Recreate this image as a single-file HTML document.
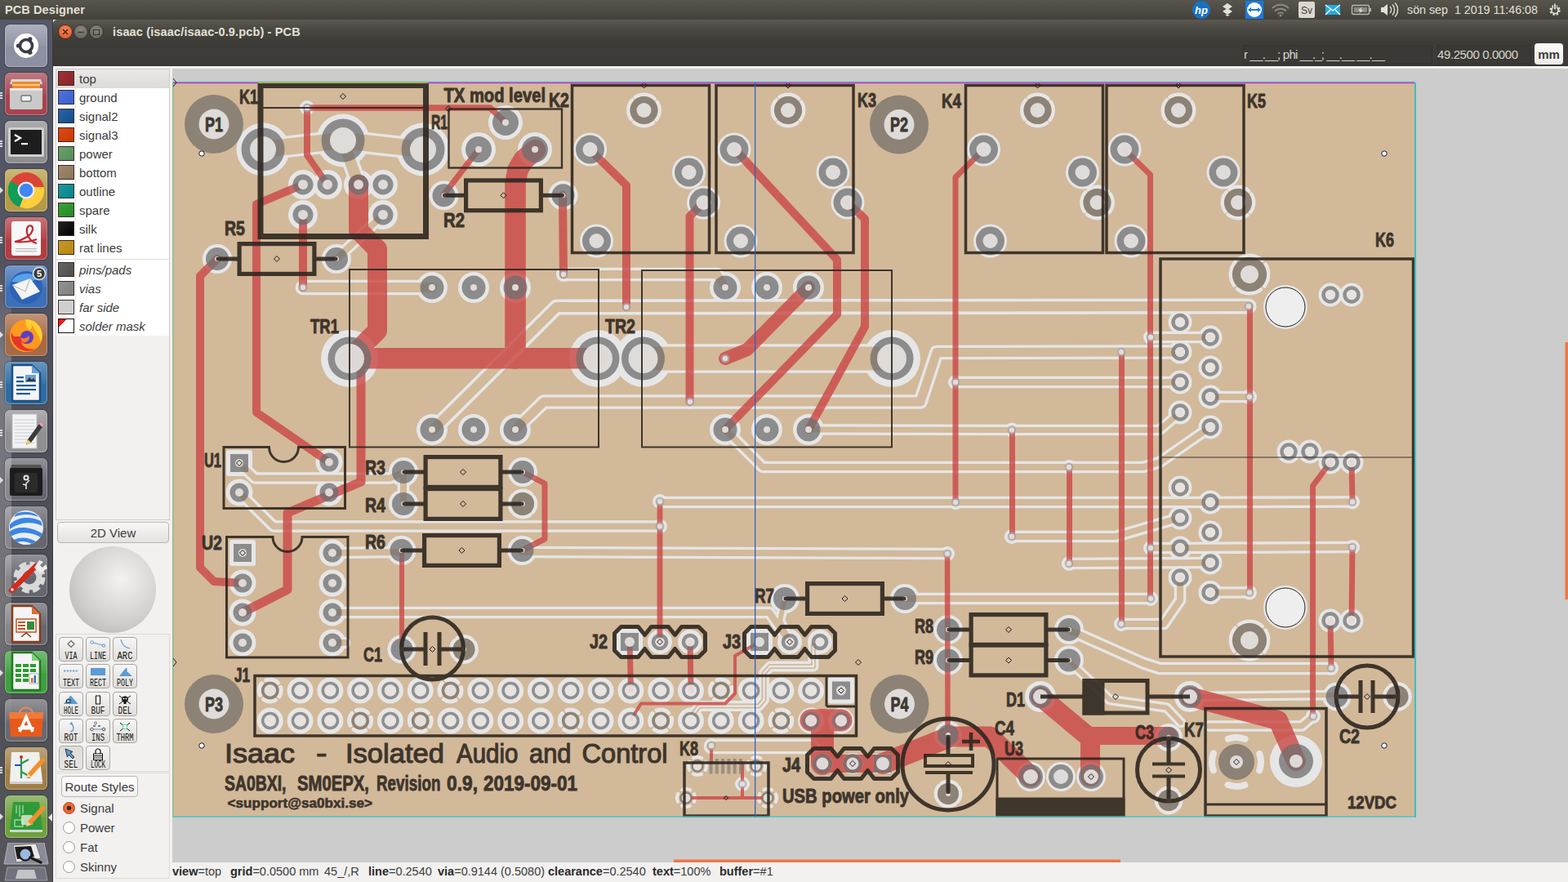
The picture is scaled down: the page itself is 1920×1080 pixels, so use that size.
<!DOCTYPE html>
<html lang="en"><head><meta charset="utf-8"><title>isaac (isaac/isaac-0.9.pcb) - PCB</title>
<style>
html,body{margin:0;padding:0}
body{width:1920px;height:1080px;overflow:hidden;position:relative;background:#f2f1f0;font-family:"Liberation Sans",sans-serif;color:#3c3c3c}
.abs{position:absolute}
#panel{left:0;top:0;width:1920px;height:24px;background:linear-gradient(#57554c,#43413b)}
#panel .t{color:#e4e0d7;font-weight:bold;font-size:14.5px;left:6px;top:4px;letter-spacing:.1px}
#title{left:65px;top:24px;width:1855px;height:57px;background:linear-gradient(#5b594f 0,#4a4842 12px,#3d3c38 27px,#3c3b37 55px,#33322f 57px);border-top-left-radius:5px}
#launcher{left:0;top:24px;width:65px;height:1056px;background:linear-gradient(#565969 0,#50525f 35%,#4c4d56 65%,#55555a 100%)}
.li{position:absolute;left:6px;width:52px;height:52px;border-radius:6px;box-shadow:inset 0 0 0 1px rgba(255,255,255,.32),0 0 0 1px rgba(0,0,0,.22)}
.li:before{content:'';position:absolute;left:1px;top:1px;right:1px;height:26px;border-radius:5px 5px 0 0;background:linear-gradient(rgba(255,255,255,.28),rgba(255,255,255,.04))}
.li svg{position:relative}
.wb{position:absolute;top:7px;width:16px;height:16px;border-radius:50%;background:radial-gradient(circle at 50% 35%,#8a887f,#5e5c55);box-shadow:0 0 0 1px #32312d}
#layers{left:69px;top:85px;width:138px;height:551px;background:#f2f1f0;box-shadow:0 0 0 1px #cfccc7}
.lr{position:absolute;left:0;width:138px;height:23px;background:#fff;font-size:15px;line-height:23px}
.lr i{position:absolute;left:2px;top:2px;width:18px;height:16px;border:1px solid #3a2a2a;box-sizing:content-box}
.lr span{position:absolute;left:28px;top:0}
.btn{position:absolute;border:1px solid #b9b6b0;border-radius:4px;background:linear-gradient(#f8f7f6,#e4e2de);box-sizing:border-box}
.tb{position:absolute;width:30px;height:30px;border:1px solid #aaa7a1;border-radius:4px;background:linear-gradient(#f7f6f5,#dfddd9);box-sizing:border-box;font-family:"Liberation Mono",monospace;font-size:9.5px;text-align:center;color:#111;line-height:10px}
.tb b{position:absolute;left:0;right:0;bottom:2px;font-weight:normal;letter-spacing:-.6px}
.rd{position:absolute;left:77px;width:13px;height:13px;border-radius:50%;border:1px solid #9a9791;background:#fff}
.rl{position:absolute;left:98px;font-size:15px;color:#3c3c3c}
#status{left:211px;top:1058px;font-size:14px;color:#3c3c3c;white-space:pre}
#status b{color:#2a2a2a}
.cb{position:absolute;top:31px;height:24px;background:#3a3935;box-shadow:inset 0 0 0 1px #33322e;color:#d9d5cc;font-size:15px;line-height:24px}
</style></head><body>
<svg style="position:absolute;left:211px;top:84px" width="1709" height="972" viewBox="211 84 1709 972" font-family="'Liberation Sans',sans-serif">
<rect x="211" y="84" width="1709" height="972" fill="#cccccc"/>
<rect x="211" y="101" width="1522" height="899" fill="#d2b99a"/>
<g fill="none" stroke="#e6e6e6" stroke-linejoin="round" stroke-linecap="round"><circle cx="322" cy="183" r="32.5" stroke="none" fill="#e6e6e6"/><circle cx="420" cy="172" r="32.5" stroke="none" fill="#e6e6e6"/><circle cx="518" cy="183" r="32.5" stroke="none" fill="#e6e6e6"/><circle cx="371" cy="226" r="18" stroke="none" fill="#e6e6e6"/><circle cx="401" cy="226" r="18" stroke="none" fill="#e6e6e6"/><circle cx="439" cy="226" r="18" stroke="none" fill="#e6e6e6"/><circle cx="469" cy="226" r="18" stroke="none" fill="#e6e6e6"/><circle cx="371" cy="263" r="18" stroke="none" fill="#e6e6e6"/><circle cx="469" cy="263" r="18" stroke="none" fill="#e6e6e6"/><circle cx="376" cy="132" r="9" stroke="none" fill="#e6e6e6"/><polyline points="322,183 420,172 518,183" stroke-width="26.6"/><polyline points="420,172 439,226" stroke-width="20.6"/><polyline points="412,317 469,263" stroke-width="14.6"/><circle cx="371" cy="352" r="9" stroke="none" fill="#e6e6e6"/><polyline points="371,352 529,352" stroke-width="18.6"/><circle cx="266" cy="317" r="18" stroke="none" fill="#e6e6e6"/><circle cx="412" cy="317" r="18" stroke="none" fill="#e6e6e6"/><circle cx="619" cy="150" r="21" stroke="none" fill="#e6e6e6"/><circle cx="586" cy="183" r="21" stroke="none" fill="#e6e6e6"/><circle cx="655" cy="183" r="21" stroke="none" fill="#e6e6e6"/><circle cx="543.5" cy="239.3" r="18" stroke="none" fill="#e6e6e6"/><circle cx="689.5" cy="239.3" r="18" stroke="none" fill="#e6e6e6"/><circle cx="690" cy="336" r="9" stroke="none" fill="#e6e6e6"/><polyline points="690,336 878,336 888,352" stroke-width="16.6"/><circle cx="788.5" cy="135" r="19.3" fill="none" stroke="#e6e6e6" stroke-width="4.2" stroke-dasharray="26.0359 4.59458" stroke-dashoffset="13.018"/><circle cx="722.5" cy="183" r="20.5" stroke="none" fill="#e6e6e6"/><circle cx="843.5" cy="211" r="20.5" stroke="none" fill="#e6e6e6"/><circle cx="861.5" cy="248" r="20.5" stroke="none" fill="#e6e6e6"/><circle cx="730.5" cy="295" r="20.5" stroke="none" fill="#e6e6e6"/><circle cx="965" cy="135" r="19.3" fill="none" stroke="#e6e6e6" stroke-width="4.2" stroke-dasharray="26.0359 4.59458" stroke-dashoffset="13.018"/><circle cx="899" cy="183" r="20.5" stroke="none" fill="#e6e6e6"/><circle cx="1020" cy="211" r="20.5" stroke="none" fill="#e6e6e6"/><circle cx="1038" cy="248" r="20.5" stroke="none" fill="#e6e6e6"/><circle cx="907" cy="295" r="20.5" stroke="none" fill="#e6e6e6"/><circle cx="1270.5" cy="135" r="19.3" fill="none" stroke="#e6e6e6" stroke-width="4.2" stroke-dasharray="26.0359 4.59458" stroke-dashoffset="13.018"/><circle cx="1204.5" cy="183" r="20.5" stroke="none" fill="#e6e6e6"/><circle cx="1325.5" cy="211" r="20.5" stroke="none" fill="#e6e6e6"/><circle cx="1343.5" cy="248" r="19.3" fill="none" stroke="#e6e6e6" stroke-width="4.2" stroke-dasharray="26.0359 4.59458" stroke-dashoffset="13.018"/><circle cx="1212.5" cy="295" r="20.5" stroke="none" fill="#e6e6e6"/><circle cx="1443" cy="135" r="19.3" fill="none" stroke="#e6e6e6" stroke-width="4.2" stroke-dasharray="26.0359 4.59458" stroke-dashoffset="13.018"/><circle cx="1377" cy="183" r="20.5" stroke="none" fill="#e6e6e6"/><circle cx="1498" cy="211" r="20.5" stroke="none" fill="#e6e6e6"/><circle cx="1516" cy="248" r="19.3" fill="none" stroke="#e6e6e6" stroke-width="4.2" stroke-dasharray="26.0359 4.59458" stroke-dashoffset="13.018"/><circle cx="1385" cy="295" r="20.5" stroke="none" fill="#e6e6e6"/><circle cx="767" cy="376" r="9" stroke="none" fill="#e6e6e6"/><circle cx="845" cy="492" r="9" stroke="none" fill="#e6e6e6"/><circle cx="428" cy="439" r="35" stroke="none" fill="#e6e6e6"/><circle cx="732" cy="439" r="35" stroke="none" fill="#e6e6e6"/><circle cx="787.5" cy="439" r="35" stroke="none" fill="#e6e6e6"/><circle cx="1092" cy="439" r="35" stroke="none" fill="#e6e6e6"/><circle cx="529" cy="352" r="19" stroke="none" fill="#e6e6e6"/><circle cx="529" cy="526" r="19" stroke="none" fill="#e6e6e6"/><circle cx="580" cy="352" r="19" stroke="none" fill="#e6e6e6"/><circle cx="580" cy="526" r="19" stroke="none" fill="#e6e6e6"/><circle cx="631" cy="352" r="19" stroke="none" fill="#e6e6e6"/><circle cx="631" cy="526" r="19" stroke="none" fill="#e6e6e6"/><circle cx="888" cy="352" r="19" stroke="none" fill="#e6e6e6"/><circle cx="888" cy="526" r="19" stroke="none" fill="#e6e6e6"/><circle cx="939" cy="352" r="19" stroke="none" fill="#e6e6e6"/><circle cx="939" cy="526" r="19" stroke="none" fill="#e6e6e6"/><circle cx="990" cy="352" r="19" stroke="none" fill="#e6e6e6"/><circle cx="990" cy="526" r="19" stroke="none" fill="#e6e6e6"/><polyline points="787.5,439 1092,439" stroke-width="35.6"/><polyline points="530.5,526 681.5,376 1529,375" stroke-width="19.2"/><circle cx="1529" cy="375" r="9" stroke="none" fill="#e6e6e6"/><polyline points="631,526 666,492 1127,492 1147,431.5 1445,431" stroke-width="17.6"/><polyline points="990,526 1239,526.5 1420,526.5 1445,505" stroke-width="13.6"/><polyline points="888,526 934,572 1400,572 1420,566 1482,523" stroke-width="14.6"/><circle cx="888" cy="439" r="9" stroke="none" fill="#e6e6e6"/><rect x="277" y="551" width="32" height="32" rx="3" stroke="none" fill="#e6e6e6"/><circle cx="403" cy="566" r="16.5" stroke="none" fill="#e6e6e6"/><circle cx="293" cy="603" r="16.5" stroke="none" fill="#e6e6e6"/><circle cx="403" cy="603" r="16.5" stroke="none" fill="#e6e6e6"/><rect x="281" y="661" width="32" height="32" rx="3" stroke="none" fill="#e6e6e6"/><circle cx="297" cy="714" r="16.5" stroke="none" fill="#e6e6e6"/><circle cx="297" cy="750" r="16.5" stroke="none" fill="#e6e6e6"/><circle cx="297" cy="787" r="16.5" stroke="none" fill="#e6e6e6"/><circle cx="407" cy="677" r="16.5" stroke="none" fill="#e6e6e6"/><circle cx="407" cy="714" r="16.5" stroke="none" fill="#e6e6e6"/><circle cx="407" cy="750" r="16.5" stroke="none" fill="#e6e6e6"/><circle cx="407" cy="787" r="16.5" stroke="none" fill="#e6e6e6"/><polyline points="293,567 312,585.5 478,585.5 494,578" stroke-width="14.6"/><polyline points="494,578 494,617" stroke-width="14.6"/><polyline points="293,603 335,644.5 808,644.5" stroke-width="14.6"/><polyline points="407,677 490,676" stroke-width="14.6"/><polyline points="407,750 942,750 967,786" stroke-width="14.6"/><polyline points="407,787 422,787" stroke-width="14.6"/><polyline points="639,676 1160,678" stroke-width="14.6"/><circle cx="808" cy="614" r="9" stroke="none" fill="#e6e6e6"/><circle cx="808" cy="644.5" r="9" stroke="none" fill="#e6e6e6"/><polyline points="808,615 1482,615 1656,614.5" stroke-width="14.6"/><circle cx="494" cy="578" r="18" stroke="none" fill="#e6e6e6"/><circle cx="640" cy="578" r="18" stroke="none" fill="#e6e6e6"/><circle cx="494" cy="617" r="18" stroke="none" fill="#e6e6e6"/><circle cx="640" cy="617" r="16.3" fill="none" stroke="#e6e6e6" stroke-width="4.2" stroke-dasharray="22.0304 3.88772" stroke-dashoffset="11.0152"/><circle cx="491.5" cy="674" r="18" stroke="none" fill="#e6e6e6"/><circle cx="639.5" cy="674" r="18" stroke="none" fill="#e6e6e6"/><circle cx="492" cy="795" r="17.5" stroke="none" fill="#e6e6e6"/><circle cx="568" cy="795" r="15.8" fill="none" stroke="#e6e6e6" stroke-width="4.2" stroke-dasharray="21.3628 3.76991" stroke-dashoffset="10.6814"/><circle cx="330.75" cy="845.5" r="13.5" fill="none" stroke="#e6e6e6" stroke-width="5" stroke-dasharray="15.3938 6.59734" stroke-dashoffset="7.6969"/><circle cx="330.75" cy="882.5" r="16" stroke="none" fill="#e6e6e6"/><circle cx="367.55" cy="845.5" r="16" stroke="none" fill="#e6e6e6"/><circle cx="367.55" cy="882.5" r="16" stroke="none" fill="#e6e6e6"/><circle cx="404.35" cy="845.5" r="16" stroke="none" fill="#e6e6e6"/><circle cx="404.35" cy="882.5" r="16" stroke="none" fill="#e6e6e6"/><circle cx="441.15" cy="845.5" r="16" stroke="none" fill="#e6e6e6"/><circle cx="441.15" cy="882.5" r="13.5" fill="none" stroke="#e6e6e6" stroke-width="5" stroke-dasharray="15.3938 6.59734" stroke-dashoffset="7.6969"/><circle cx="477.95" cy="845.5" r="16" stroke="none" fill="#e6e6e6"/><circle cx="477.95" cy="882.5" r="16" stroke="none" fill="#e6e6e6"/><circle cx="514.75" cy="845.5" r="16" stroke="none" fill="#e6e6e6"/><circle cx="514.75" cy="882.5" r="13.5" fill="none" stroke="#e6e6e6" stroke-width="5" stroke-dasharray="15.3938 6.59734" stroke-dashoffset="7.6969"/><circle cx="551.55" cy="845.5" r="13.5" fill="none" stroke="#e6e6e6" stroke-width="5" stroke-dasharray="15.3938 6.59734" stroke-dashoffset="7.6969"/><circle cx="551.55" cy="882.5" r="16" stroke="none" fill="#e6e6e6"/><circle cx="588.35" cy="845.5" r="16" stroke="none" fill="#e6e6e6"/><circle cx="588.35" cy="882.5" r="16" stroke="none" fill="#e6e6e6"/><circle cx="625.15" cy="845.5" r="16" stroke="none" fill="#e6e6e6"/><circle cx="625.15" cy="882.5" r="16" stroke="none" fill="#e6e6e6"/><circle cx="661.95" cy="845.5" r="16" stroke="none" fill="#e6e6e6"/><circle cx="661.95" cy="882.5" r="16" stroke="none" fill="#e6e6e6"/><circle cx="698.75" cy="845.5" r="16" stroke="none" fill="#e6e6e6"/><circle cx="698.75" cy="882.5" r="13.5" fill="none" stroke="#e6e6e6" stroke-width="5" stroke-dasharray="15.3938 6.59734" stroke-dashoffset="7.6969"/><circle cx="735.55" cy="845.5" r="16" stroke="none" fill="#e6e6e6"/><circle cx="735.55" cy="882.5" r="16" stroke="none" fill="#e6e6e6"/><circle cx="772.35" cy="845.5" r="16" stroke="none" fill="#e6e6e6"/><circle cx="772.35" cy="882.5" r="16" stroke="none" fill="#e6e6e6"/><circle cx="809.15" cy="845.5" r="16" stroke="none" fill="#e6e6e6"/><circle cx="809.15" cy="882.5" r="13.5" fill="none" stroke="#e6e6e6" stroke-width="5" stroke-dasharray="15.3938 6.59734" stroke-dashoffset="7.6969"/><circle cx="845.95" cy="845.5" r="16" stroke="none" fill="#e6e6e6"/><circle cx="845.95" cy="882.5" r="16" stroke="none" fill="#e6e6e6"/><circle cx="882.75" cy="845.5" r="13.5" fill="none" stroke="#e6e6e6" stroke-width="5" stroke-dasharray="15.3938 6.59734" stroke-dashoffset="7.6969"/><circle cx="882.75" cy="882.5" r="16" stroke="none" fill="#e6e6e6"/><circle cx="919.55" cy="845.5" r="16" stroke="none" fill="#e6e6e6"/><circle cx="919.55" cy="882.5" r="16" stroke="none" fill="#e6e6e6"/><circle cx="956.35" cy="845.5" r="16" stroke="none" fill="#e6e6e6"/><circle cx="956.35" cy="882.5" r="13.5" fill="none" stroke="#e6e6e6" stroke-width="5" stroke-dasharray="15.3938 6.59734" stroke-dashoffset="7.6969"/><circle cx="993.15" cy="845.5" r="16" stroke="none" fill="#e6e6e6"/><circle cx="993.15" cy="882.5" r="16" stroke="none" fill="#e6e6e6"/><rect x="1013.95" y="829.5" width="32" height="32" rx="3" stroke="none" fill="#e6e6e6"/><circle cx="1029.95" cy="882.5" r="16" stroke="none" fill="#e6e6e6"/><rect x="755" y="770" width="32" height="32" rx="3" stroke="none" fill="#e6e6e6"/><circle cx="808" cy="786" r="15" stroke="none" fill="#e6e6e6"/><circle cx="845" cy="786" r="15" stroke="none" fill="#e6e6e6"/><rect x="914" y="770" width="32" height="32" rx="3" stroke="none" fill="#e6e6e6"/><circle cx="967" cy="786" r="15" stroke="none" fill="#e6e6e6"/><circle cx="1004" cy="786" r="15" stroke="none" fill="#e6e6e6"/><polyline points="961,733 955,760 967,786" stroke-width="12.6"/><polyline points="996,790 996,816 943,816 935.5,824 935.5,857 929,864.5 856,864.5 847,877" stroke-width="12.8"/><polyline points="1108,733 1409,733" stroke-width="14.6"/><rect x="1069" y="923" width="24" height="24" rx="3" stroke="none" fill="#e6e6e6"/><circle cx="1007" cy="935" r="13" stroke="none" fill="#e6e6e6"/><circle cx="1044" cy="935" r="13" stroke="none" fill="#e6e6e6"/><circle cx="961" cy="733" r="18" stroke="none" fill="#e6e6e6"/><circle cx="1108" cy="733" r="18" stroke="none" fill="#e6e6e6"/><circle cx="1161" cy="771" r="18" stroke="none" fill="#e6e6e6"/><circle cx="1309" cy="771" r="18" stroke="none" fill="#e6e6e6"/><circle cx="1161" cy="808.5" r="18" stroke="none" fill="#e6e6e6"/><circle cx="1309" cy="808.5" r="18" stroke="none" fill="#e6e6e6"/><circle cx="1160" cy="678" r="9" stroke="none" fill="#e6e6e6"/><circle cx="1161" cy="900" r="17" stroke="none" fill="#e6e6e6"/><circle cx="1161" cy="972" r="15.3" fill="none" stroke="#e6e6e6" stroke-width="4.2" stroke-dasharray="20.6952 3.6521" stroke-dashoffset="10.3476"/><circle cx="1262" cy="951" r="18" stroke="none" fill="#e6e6e6"/><circle cx="1299" cy="951" r="18" stroke="none" fill="#e6e6e6"/><circle cx="1336" cy="951" r="18" stroke="none" fill="#e6e6e6"/><circle cx="1274" cy="853" r="19" stroke="none" fill="#e6e6e6"/><circle cx="1457" cy="853" r="19" stroke="none" fill="#e6e6e6"/><circle cx="1431" cy="903" r="17" stroke="none" fill="#e6e6e6"/><circle cx="1431" cy="980" r="15.3" fill="none" stroke="#e6e6e6" stroke-width="4.2" stroke-dasharray="20.6952 3.6521" stroke-dashoffset="10.3476"/><circle cx="1514" cy="933" r="30" fill="none" stroke="#e6e6e6" stroke-width="8" stroke-dasharray="21.2058 25.9181" stroke-dashoffset="10.6029" stroke-linecap="round"/><circle cx="1587" cy="932" r="32" stroke="none" fill="#e6e6e6"/><circle cx="1637" cy="853" r="17.5" stroke="none" fill="#e6e6e6"/><circle cx="1711" cy="853" r="15.8" fill="none" stroke="#e6e6e6" stroke-width="4.2" stroke-dasharray="21.3628 3.76991" stroke-dashoffset="10.6814"/><circle cx="1530" cy="336" r="23.3" fill="none" stroke="#e6e6e6" stroke-width="4.2" stroke-dasharray="31.3767 5.53706" stroke-dashoffset="15.6883"/><circle cx="1530" cy="784" r="23.3" fill="none" stroke="#e6e6e6" stroke-width="4.2" stroke-dasharray="31.3767 5.53706" stroke-dashoffset="15.6883"/><circle cx="1574" cy="376" r="27" stroke="none" fill="#e6e6e6"/><circle cx="1574" cy="744" r="27" stroke="none" fill="#e6e6e6"/><circle cx="1445" cy="394.5" r="14.5" stroke="none" fill="#e6e6e6"/><circle cx="1445" cy="431" r="14.5" stroke="none" fill="#e6e6e6"/><circle cx="1445" cy="468" r="14.5" stroke="none" fill="#e6e6e6"/><circle cx="1445" cy="505" r="14.5" stroke="none" fill="#e6e6e6"/><circle cx="1482" cy="413" r="14.5" stroke="none" fill="#e6e6e6"/><circle cx="1482" cy="450" r="14.5" stroke="none" fill="#e6e6e6"/><circle cx="1482" cy="486" r="14.5" stroke="none" fill="#e6e6e6"/><circle cx="1482" cy="523" r="14.5" stroke="none" fill="#e6e6e6"/><circle cx="1445" cy="597" r="14.5" stroke="none" fill="#e6e6e6"/><circle cx="1445" cy="634" r="14.5" stroke="none" fill="#e6e6e6"/><circle cx="1445" cy="671" r="14.5" stroke="none" fill="#e6e6e6"/><circle cx="1445" cy="707" r="14.5" stroke="none" fill="#e6e6e6"/><circle cx="1482" cy="615" r="14.5" stroke="none" fill="#e6e6e6"/><circle cx="1482" cy="652" r="14.5" stroke="none" fill="#e6e6e6"/><circle cx="1482" cy="689" r="14.5" stroke="none" fill="#e6e6e6"/><circle cx="1482" cy="725.5" r="14.5" stroke="none" fill="#e6e6e6"/><circle cx="1629" cy="361" r="14.5" stroke="none" fill="#e6e6e6"/><circle cx="1655" cy="361" r="14.5" stroke="none" fill="#e6e6e6"/><circle cx="1578" cy="553" r="14.5" stroke="none" fill="#e6e6e6"/><circle cx="1604" cy="553" r="14.5" stroke="none" fill="#e6e6e6"/><circle cx="1629" cy="566" r="14.5" stroke="none" fill="#e6e6e6"/><circle cx="1655" cy="566" r="14.5" stroke="none" fill="#e6e6e6"/><circle cx="1629" cy="760" r="14.5" stroke="none" fill="#e6e6e6"/><circle cx="1655" cy="760" r="14.5" stroke="none" fill="#e6e6e6"/><circle cx="1409" cy="413" r="9" stroke="none" fill="#e6e6e6"/><polyline points="1409,413 1482,413" stroke-width="14.6"/><circle cx="1373" cy="431" r="9" stroke="none" fill="#e6e6e6"/><circle cx="1170" cy="468" r="9" stroke="none" fill="#e6e6e6"/><polyline points="1170,468 1445,468" stroke-width="14.6"/><circle cx="1239" cy="526.5" r="9" stroke="none" fill="#e6e6e6"/><circle cx="1530" cy="486" r="9" stroke="none" fill="#e6e6e6"/><polyline points="1482,486 1530,486" stroke-width="14.6"/><circle cx="1309" cy="572" r="9" stroke="none" fill="#e6e6e6"/><circle cx="1170" cy="615" r="9" stroke="none" fill="#e6e6e6"/><circle cx="1239" cy="657" r="9" stroke="none" fill="#e6e6e6"/><polyline points="1239,657 1366,657 1445,634" stroke-width="14.6"/><circle cx="1409" cy="671" r="9" stroke="none" fill="#e6e6e6"/><polyline points="1409,671 1445,671 1656,670" stroke-width="14.6"/><circle cx="1656" cy="670" r="9" stroke="none" fill="#e6e6e6"/><circle cx="1656" cy="614.5" r="9" stroke="none" fill="#e6e6e6"/><circle cx="1309" cy="690" r="9" stroke="none" fill="#e6e6e6"/><polyline points="1309,690 1482,689" stroke-width="14.6"/><circle cx="1409" cy="733" r="9" stroke="none" fill="#e6e6e6"/><circle cx="1373" cy="764" r="9" stroke="none" fill="#e6e6e6"/><polyline points="1373,764 1425,764 1445,735 1445,707" stroke-width="14.6"/><circle cx="1530" cy="725.5" r="9" stroke="none" fill="#e6e6e6"/><polyline points="1482,725.5 1530,725.5" stroke-width="14.6"/><circle cx="1608" cy="877" r="9" stroke="none" fill="#e6e6e6"/><circle cx="1630" cy="818" r="9" stroke="none" fill="#e6e6e6"/><polyline points="1308,771 1400,812 1420,818.5 1630,818.5" stroke-width="15.6"/><polyline points="1308.5,809 1359,857 1428.5,866.5 1446,885" stroke-width="12.6"/><polyline points="1457,853 1637,851" stroke-width="12.6"/><polyline points="1608,877 1594,889 1480,889" stroke-width="13.6"/><circle cx="854" cy="938" r="11" fill="none" stroke="#e6e6e6" stroke-width="4" stroke-dasharray="10.3673 6.9115" stroke-dashoffset="5.18363"/><circle cx="926" cy="938" r="11" fill="none" stroke="#e6e6e6" stroke-width="4" stroke-dasharray="10.3673 6.9115" stroke-dashoffset="5.18363"/><circle cx="840" cy="977" r="11" fill="none" stroke="#e6e6e6" stroke-width="4" stroke-dasharray="10.3673 6.9115" stroke-dashoffset="5.18363"/><circle cx="940" cy="977" r="11" fill="none" stroke="#e6e6e6" stroke-width="4" stroke-dasharray="10.3673 6.9115" stroke-dashoffset="5.18363"/><circle cx="909" cy="960" r="9" stroke="none" fill="#e6e6e6"/><circle cx="871" cy="913" r="9" stroke="none" fill="#e6e6e6"/><polyline points="871,914 995,914" stroke-width="18.6"/></g>
<g fill="none" stroke="#d2b99a" stroke-linejoin="round" stroke-linecap="round"><polyline points="322,183 420,172 518,183" stroke-width="20"/><polyline points="420,172 439,226" stroke-width="14"/><polyline points="412,317 469,263" stroke-width="8"/><polyline points="371,352 529,352" stroke-width="12"/><polyline points="690,336 878,336 888,352" stroke-width="10"/><polyline points="787.5,439 1092,439" stroke-width="29"/><polyline points="530.5,526 681.5,376 1529,375" stroke-width="12"/><polyline points="631,526 666,492 1127,492 1147,431.5 1445,431" stroke-width="11"/><polyline points="990,526 1239,526.5 1420,526.5 1445,505" stroke-width="7"/><polyline points="888,526 934,572 1400,572 1420,566 1482,523" stroke-width="8"/><polyline points="293,567 312,585.5 478,585.5 494,578" stroke-width="8"/><polyline points="494,578 494,617" stroke-width="8"/><polyline points="293,603 335,644.5 808,644.5" stroke-width="8"/><polyline points="407,677 490,676" stroke-width="8"/><polyline points="407,750 942,750 967,786" stroke-width="8"/><polyline points="407,787 422,787" stroke-width="8"/><polyline points="639,676 1160,678" stroke-width="8"/><polyline points="808,615 1482,615 1656,614.5" stroke-width="8"/><polyline points="961,733 955,760 967,786" stroke-width="6"/><polyline points="996,790 996,816 943,816 935.5,824 935.5,857 929,864.5 856,864.5 847,877" stroke-width="6.2"/><polyline points="996,790 996,816 943,816 935.5,824 935.5,857 929,864.5 856,864.5 847,877" stroke-width="2.4" stroke="#e6e6e6"/><polyline points="1108,733 1409,733" stroke-width="8"/><polyline points="1409,413 1482,413" stroke-width="8"/><polyline points="1170,468 1445,468" stroke-width="8"/><polyline points="1482,486 1530,486" stroke-width="8"/><polyline points="1239,657 1366,657 1445,634" stroke-width="8"/><polyline points="1409,671 1445,671 1656,670" stroke-width="8"/><polyline points="1309,690 1482,689" stroke-width="8"/><polyline points="1373,764 1425,764 1445,735 1445,707" stroke-width="8"/><polyline points="1482,725.5 1530,725.5" stroke-width="8"/><polyline points="1308,771 1400,812 1420,818.5 1630,818.5" stroke-width="9"/><polyline points="1308.5,809 1359,857 1428.5,866.5 1446,885" stroke-width="6"/><polyline points="1457,853 1637,851" stroke-width="6"/><polyline points="1608,877 1594,889 1480,889" stroke-width="7"/><polyline points="871,914 995,914" stroke-width="12"/></g>
<g fill="none" stroke="#cb4a48" stroke-linejoin="round" stroke-linecap="round" opacity="0.82"><polyline points="376,132 600,132 619,150" stroke-width="7.5"/><polyline points="376,132 376,190 401,226" stroke-width="8"/><polyline points="371,226 314,250 314,505 403,566" stroke-width="10"/><polyline points="439,226 439,282 462,305 462,405 428,439" stroke-width="24"/><polyline points="428,438.7 732,438.7" stroke-width="25.5"/><polyline points="631,439 631,224 634,208 641,196 655.5,183.5" stroke-width="25.6"/><polyline points="371,263 371,352" stroke-width="10"/><polyline points="266,317 245,338 245,695 262,712 297,714" stroke-width="10"/><polyline points="586,183 543,239" stroke-width="7"/><polyline points="689,239 690,336" stroke-width="10"/><polyline points="722,183 767,227 767,376" stroke-width="10"/><polyline points="861,248 844.5,265 844.5,492" stroke-width="10"/><polyline points="899,182 1025,318 1025,385 888,526" stroke-width="10"/><polyline points="1038,248 1059,268 1059,400 990,526" stroke-width="10"/><polyline points="1204.5,183 1170,217 1170,615" stroke-width="7"/><polyline points="1377,183 1408.5,214 1408.5,733" stroke-width="7"/><polyline points="990,352 915,428 888,439" stroke-width="16"/><polyline points="428,439 442,452 442,590 352,628 352,722 297,750" stroke-width="11"/><polyline points="808,614 808,786" stroke-width="6.8"/><polyline points="640,578 667,592 667,660 639,674" stroke-width="7"/><polyline points="492,674 492,795" stroke-width="6"/><polyline points="771,786 772.5,845" stroke-width="7"/><polyline points="845,786 846,845" stroke-width="7"/><polyline points="930,786 900,803 900,849 888,861.5 785,861.5 772,882" stroke-width="4"/><polyline points="993,882 1030,882" stroke-width="27"/><polyline points="1007,882 1007,935" stroke-width="28"/><polyline points="1007,935 1081,935" stroke-width="22"/><polyline points="1081,935 1161,903" stroke-width="26"/><polyline points="1161,902 1212,902 1262,951" stroke-width="25"/><polyline points="1160,678 1160.5,900" stroke-width="6.5"/><polyline points="1274,853 1335,904 1335,951" stroke-width="24"/><polyline points="1335,901 1431,901" stroke-width="22"/><polyline points="1457,853 1565,882 1587,932" stroke-width="24"/><polyline points="1373.5,431 1373.5,764" stroke-width="7"/><polyline points="1239.5,526 1239.5,657" stroke-width="7"/><polyline points="1309.5,572 1309.5,690" stroke-width="7"/><polyline points="1530.5,375 1530.5,725" stroke-width="7"/><polyline points="1629,566 1607.5,595 1607.5,877" stroke-width="7"/><polyline points="1655,566 1656,614" stroke-width="7"/><polyline points="1656,670 1655,760" stroke-width="7"/><polyline points="1629,760 1630,818" stroke-width="7"/><polyline points="848,977 932,977" stroke-width="4"/><polyline points="909,936 909,977" stroke-width="4"/><polyline points="871,913 871,934" stroke-width="4"/></g>
<g opacity="0.75"><circle cx="262" cy="152" r="36" fill="#75706a"/><circle cx="1101" cy="152.5" r="36" fill="#75706a"/><circle cx="262" cy="862" r="36" fill="#75706a"/><circle cx="1101.5" cy="862" r="36" fill="#75706a"/><circle cx="322" cy="183" r="26.5" fill="#6e6e6e"/><circle cx="420" cy="172" r="26.5" fill="#6e6e6e"/><circle cx="518" cy="183" r="26.5" fill="#6e6e6e"/><circle cx="371" cy="226" r="12.5" fill="#6e6e6e"/><circle cx="401" cy="226" r="12.5" fill="#6e6e6e"/><circle cx="439" cy="226" r="12.5" fill="#6e6e6e"/><circle cx="469" cy="226" r="12.5" fill="#6e6e6e"/><circle cx="371" cy="263" r="12.5" fill="#6e6e6e"/><circle cx="469" cy="263" r="12.5" fill="#6e6e6e"/><circle cx="376" cy="132" r="5.5" fill="#a9a9a9"/><circle cx="371" cy="352" r="5.5" fill="#a9a9a9"/><circle cx="266" cy="317" r="14" fill="#6e6e6e"/><circle cx="412" cy="317" r="14" fill="#6e6e6e"/><circle cx="619" cy="150" r="16" fill="#6e6e6e"/><circle cx="586" cy="183" r="16" fill="#6e6e6e"/><circle cx="655" cy="183" r="16" fill="#6e6e6e"/><circle cx="543.5" cy="239.3" r="14" fill="#6e6e6e"/><circle cx="689.5" cy="239.3" r="14" fill="#6e6e6e"/><circle cx="690" cy="336" r="5.5" fill="#a9a9a9"/><circle cx="788.5" cy="135" r="17" fill="#75706a"/><circle cx="722.5" cy="183" r="17.5" fill="#6e6e6e"/><circle cx="843.5" cy="211" r="17.5" fill="#6e6e6e"/><circle cx="861.5" cy="248" r="17.5" fill="#6e6e6e"/><circle cx="730.5" cy="295" r="17.5" fill="#6e6e6e"/><circle cx="965" cy="135" r="17" fill="#75706a"/><circle cx="899" cy="183" r="17.5" fill="#6e6e6e"/><circle cx="1020" cy="211" r="17.5" fill="#6e6e6e"/><circle cx="1038" cy="248" r="17.5" fill="#6e6e6e"/><circle cx="907" cy="295" r="17.5" fill="#6e6e6e"/><circle cx="1270.5" cy="135" r="17" fill="#75706a"/><circle cx="1204.5" cy="183" r="17.5" fill="#6e6e6e"/><circle cx="1325.5" cy="211" r="17.5" fill="#6e6e6e"/><circle cx="1343.5" cy="248" r="17" fill="#75706a"/><circle cx="1212.5" cy="295" r="17.5" fill="#6e6e6e"/><circle cx="1443" cy="135" r="17" fill="#75706a"/><circle cx="1377" cy="183" r="17.5" fill="#6e6e6e"/><circle cx="1498" cy="211" r="17.5" fill="#6e6e6e"/><circle cx="1516" cy="248" r="17" fill="#75706a"/><circle cx="1385" cy="295" r="17.5" fill="#6e6e6e"/><circle cx="767" cy="376" r="5.5" fill="#a9a9a9"/><circle cx="845" cy="492" r="5.5" fill="#a9a9a9"/><circle cx="428" cy="439" r="26.5" fill="#6e6e6e"/><circle cx="732" cy="439" r="26.5" fill="#6e6e6e"/><circle cx="787.5" cy="439" r="26.5" fill="#6e6e6e"/><circle cx="1092" cy="439" r="26.5" fill="#6e6e6e"/><circle cx="529" cy="352" r="14.5" fill="#6e6e6e"/><circle cx="529" cy="526" r="14.5" fill="#6e6e6e"/><circle cx="580" cy="352" r="14.5" fill="#6e6e6e"/><circle cx="580" cy="526" r="14.5" fill="#6e6e6e"/><circle cx="631" cy="352" r="14.5" fill="#6e6e6e"/><circle cx="631" cy="526" r="14.5" fill="#6e6e6e"/><circle cx="888" cy="352" r="14.5" fill="#6e6e6e"/><circle cx="888" cy="526" r="14.5" fill="#6e6e6e"/><circle cx="939" cy="352" r="14.5" fill="#6e6e6e"/><circle cx="939" cy="526" r="14.5" fill="#6e6e6e"/><circle cx="990" cy="352" r="14.5" fill="#6e6e6e"/><circle cx="990" cy="526" r="14.5" fill="#6e6e6e"/><circle cx="1529" cy="375" r="5.5" fill="#a9a9a9"/><circle cx="888" cy="439" r="5.5" fill="#a9a9a9"/><rect x="282" y="556" width="22" height="22" fill="#6e6e6e"/><circle cx="403" cy="566" r="11.5" fill="#6e6e6e"/><circle cx="293" cy="603" r="11.5" fill="#6e6e6e"/><circle cx="403" cy="603" r="11.5" fill="#6e6e6e"/><rect x="286" y="666" width="22" height="22" fill="#6e6e6e"/><circle cx="297" cy="714" r="11.5" fill="#6e6e6e"/><circle cx="297" cy="750" r="11.5" fill="#6e6e6e"/><circle cx="297" cy="787" r="11.5" fill="#6e6e6e"/><circle cx="407" cy="677" r="11.5" fill="#6e6e6e"/><circle cx="407" cy="714" r="11.5" fill="#6e6e6e"/><circle cx="407" cy="750" r="11.5" fill="#6e6e6e"/><circle cx="407" cy="787" r="11.5" fill="#6e6e6e"/><circle cx="808" cy="614" r="5.5" fill="#a9a9a9"/><circle cx="808" cy="644.5" r="5.5" fill="#a9a9a9"/><circle cx="494" cy="578" r="14" fill="#6e6e6e"/><circle cx="640" cy="578" r="14" fill="#6e6e6e"/><circle cx="494" cy="617" r="14" fill="#6e6e6e"/><circle cx="640" cy="617" r="14" fill="#75706a"/><circle cx="491.5" cy="674" r="14" fill="#6e6e6e"/><circle cx="639.5" cy="674" r="14" fill="#6e6e6e"/><circle cx="492" cy="795" r="13.5" fill="#6e6e6e"/><circle cx="568" cy="795" r="13.5" fill="#75706a"/><circle cx="330.75" cy="845.5" r="8.95" fill="none" stroke="#75706a" stroke-width="3.7"/><circle cx="330.75" cy="882.5" r="8.95" fill="none" stroke="#727272" stroke-width="3.7"/><circle cx="367.55" cy="845.5" r="8.95" fill="none" stroke="#727272" stroke-width="3.7"/><circle cx="367.55" cy="882.5" r="8.95" fill="none" stroke="#727272" stroke-width="3.7"/><circle cx="404.35" cy="845.5" r="8.95" fill="none" stroke="#727272" stroke-width="3.7"/><circle cx="404.35" cy="882.5" r="8.95" fill="none" stroke="#727272" stroke-width="3.7"/><circle cx="441.15" cy="845.5" r="8.95" fill="none" stroke="#727272" stroke-width="3.7"/><circle cx="441.15" cy="882.5" r="8.95" fill="none" stroke="#75706a" stroke-width="3.7"/><circle cx="477.95" cy="845.5" r="8.95" fill="none" stroke="#727272" stroke-width="3.7"/><circle cx="477.95" cy="882.5" r="8.95" fill="none" stroke="#727272" stroke-width="3.7"/><circle cx="514.75" cy="845.5" r="8.95" fill="none" stroke="#727272" stroke-width="3.7"/><circle cx="514.75" cy="882.5" r="8.95" fill="none" stroke="#75706a" stroke-width="3.7"/><circle cx="551.55" cy="845.5" r="8.95" fill="none" stroke="#75706a" stroke-width="3.7"/><circle cx="551.55" cy="882.5" r="8.95" fill="none" stroke="#727272" stroke-width="3.7"/><circle cx="588.35" cy="845.5" r="8.95" fill="none" stroke="#727272" stroke-width="3.7"/><circle cx="588.35" cy="882.5" r="8.95" fill="none" stroke="#727272" stroke-width="3.7"/><circle cx="625.15" cy="845.5" r="8.95" fill="none" stroke="#727272" stroke-width="3.7"/><circle cx="625.15" cy="882.5" r="8.95" fill="none" stroke="#727272" stroke-width="3.7"/><circle cx="661.95" cy="845.5" r="8.95" fill="none" stroke="#727272" stroke-width="3.7"/><circle cx="661.95" cy="882.5" r="8.95" fill="none" stroke="#727272" stroke-width="3.7"/><circle cx="698.75" cy="845.5" r="8.95" fill="none" stroke="#727272" stroke-width="3.7"/><circle cx="698.75" cy="882.5" r="8.95" fill="none" stroke="#75706a" stroke-width="3.7"/><circle cx="735.55" cy="845.5" r="8.95" fill="none" stroke="#727272" stroke-width="3.7"/><circle cx="735.55" cy="882.5" r="8.95" fill="none" stroke="#727272" stroke-width="3.7"/><circle cx="772.35" cy="845.5" r="8.95" fill="none" stroke="#727272" stroke-width="3.7"/><circle cx="772.35" cy="882.5" r="8.95" fill="none" stroke="#727272" stroke-width="3.7"/><circle cx="809.15" cy="845.5" r="8.95" fill="none" stroke="#727272" stroke-width="3.7"/><circle cx="809.15" cy="882.5" r="8.95" fill="none" stroke="#75706a" stroke-width="3.7"/><circle cx="845.95" cy="845.5" r="8.95" fill="none" stroke="#727272" stroke-width="3.7"/><circle cx="845.95" cy="882.5" r="8.95" fill="none" stroke="#727272" stroke-width="3.7"/><circle cx="882.75" cy="845.5" r="8.95" fill="none" stroke="#75706a" stroke-width="3.7"/><circle cx="882.75" cy="882.5" r="8.95" fill="none" stroke="#727272" stroke-width="3.7"/><circle cx="919.55" cy="845.5" r="8.95" fill="none" stroke="#727272" stroke-width="3.7"/><circle cx="919.55" cy="882.5" r="8.95" fill="none" stroke="#727272" stroke-width="3.7"/><circle cx="956.35" cy="845.5" r="8.95" fill="none" stroke="#727272" stroke-width="3.7"/><circle cx="956.35" cy="882.5" r="8.95" fill="none" stroke="#75706a" stroke-width="3.7"/><circle cx="993.15" cy="845.5" r="8.95" fill="none" stroke="#727272" stroke-width="3.7"/><circle cx="993.15" cy="882.5" r="8.95" fill="none" stroke="#727272" stroke-width="3.7"/><rect x="1018.95" y="834.5" width="22" height="22" fill="#6e6e6e"/><circle cx="1029.95" cy="882.5" r="8.95" fill="none" stroke="#727272" stroke-width="3.7"/><rect x="760" y="775" width="22" height="22" fill="#6e6e6e"/><circle cx="808" cy="786" r="7.9" fill="none" stroke="#727272" stroke-width="4.8"/><circle cx="845" cy="786" r="7.9" fill="none" stroke="#727272" stroke-width="4.8"/><rect x="919" y="775" width="22" height="22" fill="#6e6e6e"/><circle cx="967" cy="786" r="7.9" fill="none" stroke="#727272" stroke-width="4.8"/><circle cx="1004" cy="786" r="7.9" fill="none" stroke="#727272" stroke-width="4.8"/><rect x="1070" y="924" width="22" height="22" fill="#6e6e6e"/><circle cx="1007" cy="935" r="12" fill="#6e6e6e"/><circle cx="1044" cy="935" r="12" fill="#6e6e6e"/><circle cx="961" cy="733" r="14" fill="#6e6e6e"/><circle cx="1108" cy="733" r="14" fill="#6e6e6e"/><circle cx="1161" cy="771" r="14" fill="#6e6e6e"/><circle cx="1309" cy="771" r="14" fill="#6e6e6e"/><circle cx="1161" cy="808.5" r="14" fill="#6e6e6e"/><circle cx="1309" cy="808.5" r="14" fill="#6e6e6e"/><circle cx="1160" cy="678" r="5.5" fill="#a9a9a9"/><circle cx="1161" cy="900" r="13" fill="#6e6e6e"/><circle cx="1161" cy="972" r="13" fill="#75706a"/><circle cx="1262" cy="951" r="15" fill="#6e6e6e"/><circle cx="1299" cy="951" r="15" fill="#6e6e6e"/><circle cx="1336" cy="951" r="15" fill="#6e6e6e"/><circle cx="1274" cy="853" r="14" fill="#6e6e6e"/><circle cx="1457" cy="853" r="14" fill="#6e6e6e"/><circle cx="1431" cy="903" r="13" fill="#6e6e6e"/><circle cx="1431" cy="980" r="13" fill="#75706a"/><circle cx="1514" cy="933" r="22" fill="#75706a"/><circle cx="1587" cy="932" r="21" fill="#6e6e6e"/><circle cx="1637" cy="853" r="13.5" fill="#6e6e6e"/><circle cx="1711" cy="853" r="13.5" fill="#75706a"/><circle cx="1530" cy="336" r="21" fill="#75706a"/><circle cx="1530" cy="784" r="21" fill="#75706a"/><circle cx="1445" cy="394.5" r="8.4" fill="none" stroke="#75706a" stroke-width="4.6"/><circle cx="1445" cy="431" r="8.4" fill="none" stroke="#727272" stroke-width="4.6"/><circle cx="1445" cy="468" r="8.4" fill="none" stroke="#727272" stroke-width="4.6"/><circle cx="1445" cy="505" r="8.4" fill="none" stroke="#727272" stroke-width="4.6"/><circle cx="1482" cy="413" r="8.4" fill="none" stroke="#727272" stroke-width="4.6"/><circle cx="1482" cy="450" r="8.4" fill="none" stroke="#75706a" stroke-width="4.6"/><circle cx="1482" cy="486" r="8.4" fill="none" stroke="#727272" stroke-width="4.6"/><circle cx="1482" cy="523" r="8.4" fill="none" stroke="#727272" stroke-width="4.6"/><circle cx="1445" cy="597" r="8.4" fill="none" stroke="#75706a" stroke-width="4.6"/><circle cx="1445" cy="634" r="8.4" fill="none" stroke="#727272" stroke-width="4.6"/><circle cx="1445" cy="671" r="8.4" fill="none" stroke="#727272" stroke-width="4.6"/><circle cx="1445" cy="707" r="8.4" fill="none" stroke="#727272" stroke-width="4.6"/><circle cx="1482" cy="615" r="8.4" fill="none" stroke="#727272" stroke-width="4.6"/><circle cx="1482" cy="652" r="8.4" fill="none" stroke="#75706a" stroke-width="4.6"/><circle cx="1482" cy="689" r="8.4" fill="none" stroke="#727272" stroke-width="4.6"/><circle cx="1482" cy="725.5" r="8.4" fill="none" stroke="#727272" stroke-width="4.6"/><circle cx="1629" cy="361" r="8.4" fill="none" stroke="#727272" stroke-width="4.6"/><circle cx="1655" cy="361" r="8.4" fill="none" stroke="#727272" stroke-width="4.6"/><circle cx="1578" cy="553" r="8.4" fill="none" stroke="#727272" stroke-width="4.6"/><circle cx="1604" cy="553" r="8.4" fill="none" stroke="#727272" stroke-width="4.6"/><circle cx="1629" cy="566" r="8.4" fill="none" stroke="#727272" stroke-width="4.6"/><circle cx="1655" cy="566" r="8.4" fill="none" stroke="#727272" stroke-width="4.6"/><circle cx="1629" cy="760" r="8.4" fill="none" stroke="#727272" stroke-width="4.6"/><circle cx="1655" cy="760" r="8.4" fill="none" stroke="#727272" stroke-width="4.6"/><circle cx="1409" cy="413" r="5.5" fill="#a9a9a9"/><circle cx="1373" cy="431" r="5.5" fill="#a9a9a9"/><circle cx="1170" cy="468" r="5.5" fill="#a9a9a9"/><circle cx="1239" cy="526.5" r="5.5" fill="#a9a9a9"/><circle cx="1530" cy="486" r="5.5" fill="#a9a9a9"/><circle cx="1309" cy="572" r="5.5" fill="#a9a9a9"/><circle cx="1170" cy="615" r="5.5" fill="#a9a9a9"/><circle cx="1239" cy="657" r="5.5" fill="#a9a9a9"/><circle cx="1409" cy="671" r="5.5" fill="#a9a9a9"/><circle cx="1656" cy="670" r="5.5" fill="#a9a9a9"/><circle cx="1656" cy="614.5" r="5.5" fill="#a9a9a9"/><circle cx="1309" cy="690" r="5.5" fill="#a9a9a9"/><circle cx="1409" cy="733" r="5.5" fill="#a9a9a9"/><circle cx="1373" cy="764" r="5.5" fill="#a9a9a9"/><circle cx="1530" cy="725.5" r="5.5" fill="#a9a9a9"/><circle cx="1608" cy="877" r="5.5" fill="#a9a9a9"/><circle cx="1630" cy="818" r="5.5" fill="#a9a9a9"/><rect x="868.5" y="929" width="4" height="18.5" fill="#8a8276"/><rect x="875.8" y="929" width="4" height="18.5" fill="#8a8276"/><rect x="883.1" y="929" width="4" height="18.5" fill="#8a8276"/><rect x="890.4" y="929" width="4" height="18.5" fill="#8a8276"/><rect x="897.7" y="929" width="4" height="18.5" fill="#8a8276"/><rect x="905" y="929" width="4" height="18.5" fill="#8a8276"/><circle cx="854" cy="938" r="6.5" fill="none" stroke="#75706a" stroke-width="2.5"/><circle cx="926" cy="938" r="6.5" fill="none" stroke="#75706a" stroke-width="2.5"/><circle cx="840" cy="977" r="6.5" fill="none" stroke="#75706a" stroke-width="2.5"/><circle cx="940" cy="977" r="6.5" fill="none" stroke="#75706a" stroke-width="2.5"/><circle cx="909" cy="960" r="5.5" fill="#a9a9a9"/><circle cx="871" cy="913" r="5.5" fill="#a9a9a9"/></g>
<g fill="#e6e3e1" opacity="0.92"><circle cx="262" cy="152" r="18.5"/><circle cx="1101" cy="152.5" r="18.5"/><circle cx="262" cy="862" r="18.5"/><circle cx="1101.5" cy="862" r="18.5"/><circle cx="322" cy="183" r="16"/><circle cx="420" cy="172" r="16"/><circle cx="518" cy="183" r="16"/><circle cx="371" cy="226" r="6"/><circle cx="401" cy="226" r="6"/><circle cx="439" cy="226" r="6"/><circle cx="469" cy="226" r="6"/><circle cx="371" cy="263" r="6"/><circle cx="469" cy="263" r="6"/><circle cx="376" cy="132" r="3.2"/><circle cx="371" cy="352" r="3.2"/><circle cx="266" cy="317" r="3"/><circle cx="412" cy="317" r="3"/><circle cx="619" cy="150" r="4"/><circle cx="586" cy="183" r="4"/><circle cx="655" cy="183" r="4"/><circle cx="543.5" cy="239.3" r="3"/><circle cx="689.5" cy="239.3" r="3"/><circle cx="690" cy="336" r="3.2"/><circle cx="788.5" cy="135" r="9"/><circle cx="722.5" cy="183" r="9"/><circle cx="843.5" cy="211" r="9"/><circle cx="861.5" cy="248" r="9"/><circle cx="730.5" cy="295" r="9"/><circle cx="965" cy="135" r="9"/><circle cx="899" cy="183" r="9"/><circle cx="1020" cy="211" r="9"/><circle cx="1038" cy="248" r="9"/><circle cx="907" cy="295" r="9"/><circle cx="1270.5" cy="135" r="9"/><circle cx="1204.5" cy="183" r="9"/><circle cx="1325.5" cy="211" r="9"/><circle cx="1343.5" cy="248" r="9"/><circle cx="1212.5" cy="295" r="9"/><circle cx="1443" cy="135" r="9"/><circle cx="1377" cy="183" r="9"/><circle cx="1498" cy="211" r="9"/><circle cx="1516" cy="248" r="9"/><circle cx="1385" cy="295" r="9"/><circle cx="767" cy="376" r="3.2"/><circle cx="845" cy="492" r="3.2"/><circle cx="428" cy="439" r="18"/><circle cx="732" cy="439" r="18"/><circle cx="787.5" cy="439" r="18"/><circle cx="1092" cy="439" r="18"/><circle cx="529" cy="352" r="4"/><circle cx="529" cy="526" r="4"/><circle cx="580" cy="352" r="4"/><circle cx="580" cy="526" r="4"/><circle cx="631" cy="352" r="4"/><circle cx="631" cy="526" r="4"/><circle cx="888" cy="352" r="4"/><circle cx="888" cy="526" r="4"/><circle cx="939" cy="352" r="4"/><circle cx="939" cy="526" r="4"/><circle cx="990" cy="352" r="4"/><circle cx="990" cy="526" r="4"/><circle cx="1529" cy="375" r="3.2"/><circle cx="888" cy="439" r="3.2"/><circle cx="293" cy="567" r="5"/><circle cx="403" cy="566" r="5"/><circle cx="293" cy="603" r="5"/><circle cx="403" cy="603" r="5"/><circle cx="297" cy="677" r="5"/><circle cx="297" cy="714" r="5"/><circle cx="297" cy="750" r="5"/><circle cx="297" cy="787" r="5"/><circle cx="407" cy="677" r="5"/><circle cx="407" cy="714" r="5"/><circle cx="407" cy="750" r="5"/><circle cx="407" cy="787" r="5"/><circle cx="808" cy="614" r="3.2"/><circle cx="808" cy="644.5" r="3.2"/><circle cx="494" cy="578" r="3"/><circle cx="640" cy="578" r="3"/><circle cx="494" cy="617" r="3"/><circle cx="640" cy="617" r="3"/><circle cx="491.5" cy="674" r="3"/><circle cx="639.5" cy="674" r="3"/><circle cx="492" cy="795" r="3"/><circle cx="568" cy="795" r="3"/><circle cx="330.75" cy="845.5" r="7.2"/><circle cx="330.75" cy="882.5" r="7.2"/><circle cx="367.55" cy="845.5" r="7.2"/><circle cx="367.55" cy="882.5" r="7.2"/><circle cx="404.35" cy="845.5" r="7.2"/><circle cx="404.35" cy="882.5" r="7.2"/><circle cx="441.15" cy="845.5" r="7.2"/><circle cx="441.15" cy="882.5" r="7.2"/><circle cx="477.95" cy="845.5" r="7.2"/><circle cx="477.95" cy="882.5" r="7.2"/><circle cx="514.75" cy="845.5" r="7.2"/><circle cx="514.75" cy="882.5" r="7.2"/><circle cx="551.55" cy="845.5" r="7.2"/><circle cx="551.55" cy="882.5" r="7.2"/><circle cx="588.35" cy="845.5" r="7.2"/><circle cx="588.35" cy="882.5" r="7.2"/><circle cx="625.15" cy="845.5" r="7.2"/><circle cx="625.15" cy="882.5" r="7.2"/><circle cx="661.95" cy="845.5" r="7.2"/><circle cx="661.95" cy="882.5" r="7.2"/><circle cx="698.75" cy="845.5" r="7.2"/><circle cx="698.75" cy="882.5" r="7.2"/><circle cx="735.55" cy="845.5" r="7.2"/><circle cx="735.55" cy="882.5" r="7.2"/><circle cx="772.35" cy="845.5" r="7.2"/><circle cx="772.35" cy="882.5" r="7.2"/><circle cx="809.15" cy="845.5" r="7.2"/><circle cx="809.15" cy="882.5" r="7.2"/><circle cx="845.95" cy="845.5" r="7.2"/><circle cx="845.95" cy="882.5" r="7.2"/><circle cx="882.75" cy="845.5" r="7.2"/><circle cx="882.75" cy="882.5" r="7.2"/><circle cx="919.55" cy="845.5" r="7.2"/><circle cx="919.55" cy="882.5" r="7.2"/><circle cx="956.35" cy="845.5" r="7.2"/><circle cx="956.35" cy="882.5" r="7.2"/><circle cx="993.15" cy="845.5" r="7.2"/><circle cx="993.15" cy="882.5" r="7.2"/><circle cx="1029.95" cy="845.5" r="6"/><circle cx="1029.95" cy="882.5" r="7.2"/><circle cx="771" cy="786" r="6"/><circle cx="808" cy="786" r="5.6"/><circle cx="845" cy="786" r="5.6"/><circle cx="930" cy="786" r="6"/><circle cx="967" cy="786" r="5.6"/><circle cx="1004" cy="786" r="5.6"/><circle cx="1081" cy="935" r="8"/><circle cx="1007" cy="935" r="7.5"/><circle cx="1044" cy="935" r="7.5"/><circle cx="961" cy="733" r="3"/><circle cx="1108" cy="733" r="3"/><circle cx="1161" cy="771" r="3"/><circle cx="1309" cy="771" r="3"/><circle cx="1161" cy="808.5" r="3"/><circle cx="1309" cy="808.5" r="3"/><circle cx="1160" cy="678" r="3.2"/><circle cx="1161" cy="900" r="3"/><circle cx="1161" cy="972" r="3"/><circle cx="1262" cy="951" r="9"/><circle cx="1299" cy="951" r="9"/><circle cx="1336" cy="951" r="9"/><circle cx="1274" cy="853" r="9"/><circle cx="1457" cy="853" r="9"/><circle cx="1431" cy="903" r="3"/><circle cx="1431" cy="980" r="3"/><circle cx="1514" cy="933" r="8"/><circle cx="1587" cy="932" r="8"/><circle cx="1637" cy="853" r="3"/><circle cx="1711" cy="853" r="3"/><circle cx="1530" cy="336" r="11"/><circle cx="1530" cy="784" r="11"/><circle cx="1445" cy="394.5" r="6.2"/><circle cx="1445" cy="431" r="6.2"/><circle cx="1445" cy="468" r="6.2"/><circle cx="1445" cy="505" r="6.2"/><circle cx="1482" cy="413" r="6.2"/><circle cx="1482" cy="450" r="6.2"/><circle cx="1482" cy="486" r="6.2"/><circle cx="1482" cy="523" r="6.2"/><circle cx="1445" cy="597" r="6.2"/><circle cx="1445" cy="634" r="6.2"/><circle cx="1445" cy="671" r="6.2"/><circle cx="1445" cy="707" r="6.2"/><circle cx="1482" cy="615" r="6.2"/><circle cx="1482" cy="652" r="6.2"/><circle cx="1482" cy="689" r="6.2"/><circle cx="1482" cy="725.5" r="6.2"/><circle cx="1629" cy="361" r="6.2"/><circle cx="1655" cy="361" r="6.2"/><circle cx="1578" cy="553" r="6.2"/><circle cx="1604" cy="553" r="6.2"/><circle cx="1629" cy="566" r="6.2"/><circle cx="1655" cy="566" r="6.2"/><circle cx="1629" cy="760" r="6.2"/><circle cx="1655" cy="760" r="6.2"/><circle cx="1409" cy="413" r="3.2"/><circle cx="1373" cy="431" r="3.2"/><circle cx="1170" cy="468" r="3.2"/><circle cx="1239" cy="526.5" r="3.2"/><circle cx="1530" cy="486" r="3.2"/><circle cx="1309" cy="572" r="3.2"/><circle cx="1170" cy="615" r="3.2"/><circle cx="1239" cy="657" r="3.2"/><circle cx="1409" cy="671" r="3.2"/><circle cx="1656" cy="670" r="3.2"/><circle cx="1656" cy="614.5" r="3.2"/><circle cx="1309" cy="690" r="3.2"/><circle cx="1409" cy="733" r="3.2"/><circle cx="1373" cy="764" r="3.2"/><circle cx="1530" cy="725.5" r="3.2"/><circle cx="1608" cy="877" r="3.2"/><circle cx="1630" cy="818" r="3.2"/><circle cx="854" cy="938" r="5.2"/><circle cx="926" cy="938" r="5.2"/><circle cx="840" cy="977" r="5.2"/><circle cx="940" cy="977" r="5.2"/><circle cx="909" cy="960" r="3.2"/><circle cx="871" cy="913" r="3.2"/></g>
<g fill="none" stroke="#2e2720" stroke-linejoin="miter" opacity="0.9"><text x="262" y="160.8" font-size="24.5" font-weight="bold" textLength="22" lengthAdjust="spacingAndGlyphs" text-anchor="middle" stroke="#2e2720" stroke-width="0.9" stroke-linejoin="round" fill="#2e2720">P1</text><text x="1101" y="161.3" font-size="24.5" font-weight="bold" textLength="22" lengthAdjust="spacingAndGlyphs" text-anchor="middle" stroke="#2e2720" stroke-width="0.9" stroke-linejoin="round" fill="#2e2720">P2</text><text x="262" y="870.8" font-size="24.5" font-weight="bold" textLength="22" lengthAdjust="spacingAndGlyphs" text-anchor="middle" stroke="#2e2720" stroke-width="0.9" stroke-linejoin="round" fill="#2e2720">P3</text><text x="1101.5" y="870.8" font-size="24.5" font-weight="bold" textLength="22" lengthAdjust="spacingAndGlyphs" text-anchor="middle" stroke="#2e2720" stroke-width="0.9" stroke-linejoin="round" fill="#2e2720">P4</text><rect x="319" y="104.5" width="202.5" height="185" stroke-width="7" fill="none"/><polyline points="319,132 521,132" stroke-width="2"/><text x="293" y="127" font-size="24" font-weight="bold" textLength="23" lengthAdjust="spacingAndGlyphs" text-anchor="start" stroke="#2e2720" stroke-width="0.9" stroke-linejoin="round" fill="#2e2720">K1</text><rect x="293.1" y="298.6" width="91.8" height="36.8" stroke-width="5.2" fill="none"/><path d="M267 317H290.5M387.5 317H411" stroke-width="5" stroke-linecap="round"/><text x="275" y="288" font-size="24" font-weight="bold" textLength="25" lengthAdjust="spacingAndGlyphs" text-anchor="start" stroke="#2e2720" stroke-width="0.9" stroke-linejoin="round" fill="#2e2720">R5</text><text x="543.5" y="125" font-size="24.5" font-weight="bold" textLength="124.5" lengthAdjust="spacingAndGlyphs" text-anchor="start" stroke="#2e2720" stroke-width="0.9" stroke-linejoin="round" fill="#2e2720">TX mod level</text><text x="672" y="131" font-size="24" font-weight="bold" textLength="25" lengthAdjust="spacingAndGlyphs" text-anchor="start" stroke="#2e2720" stroke-width="0.9" stroke-linejoin="round" fill="#2e2720">K2</text><text x="528" y="158" font-size="24" font-weight="bold" textLength="20" lengthAdjust="spacingAndGlyphs" text-anchor="start" stroke="#2e2720" stroke-width="0.9" stroke-linejoin="round" fill="#2e2720">R1</text><rect x="549.5" y="133.5" width="138.5" height="72" stroke-width="2.4" fill="none"/><rect x="570.6" y="220.9" width="91.8" height="36.8" stroke-width="5.2" fill="none"/><path d="M544.5 239.3H568M665 239.3H688.5" stroke-width="5" stroke-linecap="round"/><text x="543" y="278" font-size="24" font-weight="bold" textLength="26" lengthAdjust="spacingAndGlyphs" text-anchor="start" stroke="#2e2720" stroke-width="0.9" stroke-linejoin="round" fill="#2e2720">R2</text><rect x="700.5" y="104.5" width="168" height="205" stroke-width="3.5" fill="none"/><rect x="877" y="104.5" width="168" height="205" stroke-width="3.5" fill="none"/><rect x="1182.5" y="104.5" width="168" height="205" stroke-width="3.5" fill="none"/><rect x="1355" y="104.5" width="168" height="205" stroke-width="3.5" fill="none"/><text x="1050" y="131" font-size="24" font-weight="bold" textLength="23" lengthAdjust="spacingAndGlyphs" text-anchor="start" stroke="#2e2720" stroke-width="0.9" stroke-linejoin="round" fill="#2e2720">K3</text><text x="1153" y="132" font-size="24" font-weight="bold" textLength="24" lengthAdjust="spacingAndGlyphs" text-anchor="start" stroke="#2e2720" stroke-width="0.9" stroke-linejoin="round" fill="#2e2720">K4</text><text x="1527" y="132" font-size="24" font-weight="bold" textLength="23" lengthAdjust="spacingAndGlyphs" text-anchor="start" stroke="#2e2720" stroke-width="0.9" stroke-linejoin="round" fill="#2e2720">K5</text><rect x="428" y="330" width="305" height="217.5" stroke-width="2" fill="none"/><rect x="786" y="331" width="306" height="216.5" stroke-width="2" fill="none"/><text x="380" y="408" font-size="24" font-weight="bold" textLength="35" lengthAdjust="spacingAndGlyphs" text-anchor="start" stroke="#2e2720" stroke-width="0.9" stroke-linejoin="round" fill="#2e2720">TR1</text><text x="741" y="408" font-size="24" font-weight="bold" textLength="37" lengthAdjust="spacingAndGlyphs" text-anchor="start" stroke="#2e2720" stroke-width="0.9" stroke-linejoin="round" fill="#2e2720">TR2</text><path d="M365.5 547.5H422.5V622.5H274V547.5H329.5A18 18 0 0 0 365.5 547.5Z" stroke-width="3"/><path d="M370 657.5H426V805H277.5V657.5H334A18 18 0 0 0 370 657.5Z" stroke-width="3"/><text x="250" y="571.5" font-size="24" font-weight="bold" textLength="21" lengthAdjust="spacingAndGlyphs" text-anchor="start" stroke="#2e2720" stroke-width="0.9" stroke-linejoin="round" fill="#2e2720">U1</text><text x="247" y="673" font-size="24" font-weight="bold" textLength="25" lengthAdjust="spacingAndGlyphs" text-anchor="start" stroke="#2e2720" stroke-width="0.9" stroke-linejoin="round" fill="#2e2720">U2</text><rect x="521.1" y="559.6" width="91.8" height="36.8" stroke-width="5.2" fill="none"/><path d="M495 578H518.5M615.5 578H639" stroke-width="5" stroke-linecap="round"/><rect x="521.1" y="598.6" width="91.8" height="36.8" stroke-width="5.2" fill="none"/><path d="M495 617H518.5M615.5 617H639" stroke-width="5" stroke-linecap="round"/><rect x="519.6" y="655.6" width="91.8" height="36.8" stroke-width="5.2" fill="none"/><path d="M492.5 674H517M614 674H638.5" stroke-width="5" stroke-linecap="round"/><text x="447" y="581" font-size="24" font-weight="bold" textLength="25" lengthAdjust="spacingAndGlyphs" text-anchor="start" stroke="#2e2720" stroke-width="0.9" stroke-linejoin="round" fill="#2e2720">R3</text><text x="447" y="627" font-size="24" font-weight="bold" textLength="25" lengthAdjust="spacingAndGlyphs" text-anchor="start" stroke="#2e2720" stroke-width="0.9" stroke-linejoin="round" fill="#2e2720">R4</text><text x="447" y="672" font-size="24" font-weight="bold" textLength="25" lengthAdjust="spacingAndGlyphs" text-anchor="start" stroke="#2e2720" stroke-width="0.9" stroke-linejoin="round" fill="#2e2720">R6</text><circle cx="529.5" cy="794" r="38" stroke-width="5"/><polyline points="492,795 521,795" stroke-width="5"/><polyline points="538,795 568,795" stroke-width="5"/><polyline points="521,774 521,815" stroke-width="5"/><polyline points="538,774 538,815" stroke-width="5"/><text x="445" y="810" font-size="24" font-weight="bold" textLength="23" lengthAdjust="spacingAndGlyphs" text-anchor="start" stroke="#2e2720" stroke-width="0.9" stroke-linejoin="round" fill="#2e2720">C1</text><rect x="312" y="827.5" width="736.5" height="73.5" stroke-width="3.5" fill="none"/><polyline points="1012,865 1012,828" stroke-width="3"/><polyline points="1012,865 1048,865" stroke-width="3"/><text x="287" y="835" font-size="24" font-weight="bold" textLength="19" lengthAdjust="spacingAndGlyphs" text-anchor="start" stroke="#2e2720" stroke-width="0.9" stroke-linejoin="round" fill="#2e2720">J1</text><polygon points="752.5,775.5 760.5,767.5 760.5,767.5 781.5,767.5 789.5,777.5 797.5,767.5 818.5,767.5 826.5,777.5 834.5,767.5 855.5,767.5 863.5,775.5 863.5,796.5 855.5,804.5 834.5,804.5 826.5,794.5 818.5,804.5 797.5,804.5 789.5,794.5 781.5,804.5 760.5,804.5 752.5,796.5" stroke-width="5" stroke-linejoin="round"/><text x="722" y="793.5" font-size="24" font-weight="bold" textLength="22" lengthAdjust="spacingAndGlyphs" text-anchor="start" stroke="#2e2720" stroke-width="0.9" stroke-linejoin="round" fill="#2e2720">J2</text><polygon points="911.5,775.5 919.5,767.5 919.5,767.5 940.5,767.5 948.5,777.5 956.5,767.5 977.5,767.5 985.5,777.5 993.5,767.5 1014.5,767.5 1022.5,775.5 1022.5,796.5 1014.5,804.5 993.5,804.5 985.5,794.5 977.5,804.5 956.5,804.5 948.5,794.5 940.5,804.5 919.5,804.5 911.5,796.5" stroke-width="5" stroke-linejoin="round"/><text x="885" y="793.5" font-size="24" font-weight="bold" textLength="22" lengthAdjust="spacingAndGlyphs" text-anchor="start" stroke="#2e2720" stroke-width="0.9" stroke-linejoin="round" fill="#2e2720">J3</text><polygon points="988.5,924.5 996.5,916.5 996.5,916.5 1017.5,916.5 1025.5,926.5 1033.5,916.5 1054.5,916.5 1062.5,926.5 1070.5,916.5 1091.5,916.5 1099.5,924.5 1099.5,945.5 1091.5,953.5 1070.5,953.5 1062.5,943.5 1054.5,953.5 1033.5,953.5 1025.5,943.5 1017.5,953.5 996.5,953.5 988.5,945.5" stroke-width="5" stroke-linejoin="round"/><text x="958" y="945" font-size="24" font-weight="bold" textLength="22" lengthAdjust="spacingAndGlyphs" text-anchor="start" stroke="#2e2720" stroke-width="0.9" stroke-linejoin="round" fill="#2e2720">J4</text><rect x="988.6" y="714.6" width="91.8" height="36.8" stroke-width="5.2" fill="none"/><path d="M962 733H986M1083 733H1107" stroke-width="5" stroke-linecap="round"/><text x="924" y="738" font-size="24" font-weight="bold" textLength="24" lengthAdjust="spacingAndGlyphs" text-anchor="start" stroke="#2e2720" stroke-width="0.9" stroke-linejoin="round" fill="#2e2720">R7</text><rect x="1189.1" y="752.6" width="91.8" height="36.8" stroke-width="5.2" fill="none"/><path d="M1162 771H1186.5M1283.5 771H1308" stroke-width="5" stroke-linecap="round"/><rect x="1189.1" y="790.1" width="91.8" height="36.8" stroke-width="5.2" fill="none"/><path d="M1162 808.5H1186.5M1283.5 808.5H1308" stroke-width="5" stroke-linecap="round"/><text x="1120" y="775" font-size="24" font-weight="bold" textLength="23" lengthAdjust="spacingAndGlyphs" text-anchor="start" stroke="#2e2720" stroke-width="0.9" stroke-linejoin="round" fill="#2e2720">R8</text><text x="1120" y="813" font-size="24" font-weight="bold" textLength="23" lengthAdjust="spacingAndGlyphs" text-anchor="start" stroke="#2e2720" stroke-width="0.9" stroke-linejoin="round" fill="#2e2720">R9</text><circle cx="1161" cy="936" r="56" stroke-width="5"/><polyline points="1161,900 1161,925" stroke-width="5"/><polyline points="1161,946 1161,972" stroke-width="5"/><rect x="1133" y="925" width="58" height="13" stroke-width="4" fill="none"/><polyline points="1133,946 1191,946" stroke-width="4"/><polyline points="1178,908 1200,908" stroke-width="4.5"/><polyline points="1189,897 1189,919" stroke-width="4.5"/><text x="1218" y="900" font-size="24" font-weight="bold" textLength="24" lengthAdjust="spacingAndGlyphs" text-anchor="start" stroke="#2e2720" stroke-width="0.9" stroke-linejoin="round" fill="#2e2720">C4</text><text x="1230" y="925" font-size="24" font-weight="bold" textLength="23" lengthAdjust="spacingAndGlyphs" text-anchor="start" stroke="#2e2720" stroke-width="0.9" stroke-linejoin="round" fill="#2e2720">U3</text><rect x="1221" y="929" width="155" height="70" stroke-width="3" fill="none"/><rect x="1221" y="978" width="155" height="21" stroke-width="3" fill="#2e2720"/><text x="1232" y="865" font-size="24" font-weight="bold" textLength="23" lengthAdjust="spacingAndGlyphs" text-anchor="start" stroke="#2e2720" stroke-width="0.9" stroke-linejoin="round" fill="#2e2720">D1</text><rect x="1328" y="833.5" width="77" height="39.5" stroke-width="5" fill="none"/><rect x="1328" y="833.5" width="22" height="39.5" stroke-width="5" fill="#2e2720"/><polyline points="1274,853 1328,853" stroke-width="5"/><polyline points="1405,853 1457,853" stroke-width="5"/><circle cx="1431" cy="942.5" r="38.5" stroke-width="5"/><polyline points="1431,903 1431,935" stroke-width="5"/><polyline points="1431,951 1431,980" stroke-width="5"/><polyline points="1411,935.5 1451,935.5" stroke-width="4"/><polyline points="1411,950.5 1451,950.5" stroke-width="4"/><text x="1390" y="905" font-size="24" font-weight="bold" textLength="23" lengthAdjust="spacingAndGlyphs" text-anchor="start" stroke="#2e2720" stroke-width="0.9" stroke-linejoin="round" fill="#2e2720">C3</text><text x="1450" y="902" font-size="24" font-weight="bold" textLength="24" lengthAdjust="spacingAndGlyphs" text-anchor="start" stroke="#2e2720" stroke-width="0.9" stroke-linejoin="round" fill="#2e2720">K7</text><rect x="1476" y="867.5" width="148" height="131.5" stroke-width="3.5" fill="none"/><polyline points="1476,985 1624,985" stroke-width="3"/><text x="1650" y="990" font-size="22" font-weight="bold" textLength="60" lengthAdjust="spacingAndGlyphs" text-anchor="start" stroke="#2e2720" stroke-width="0.9" stroke-linejoin="round" fill="#2e2720">12VDC</text><circle cx="1674" cy="853" r="38" stroke-width="5"/><polyline points="1637,853 1666,853" stroke-width="5"/><polyline points="1681,853 1711,853" stroke-width="5"/><polyline points="1666,833 1666,873" stroke-width="5"/><polyline points="1681,833 1681,873" stroke-width="5"/><text x="1640" y="910" font-size="24" font-weight="bold" textLength="25" lengthAdjust="spacingAndGlyphs" text-anchor="start" stroke="#2e2720" stroke-width="0.9" stroke-linejoin="round" fill="#2e2720">C2</text><rect x="1421" y="317" width="309.5" height="487" stroke-width="3.5" fill="none"/><polyline points="1421,560 1730,560" stroke-width="1.2"/><text x="1684" y="302" font-size="24" font-weight="bold" textLength="23" lengthAdjust="spacingAndGlyphs" text-anchor="start" stroke="#2e2720" stroke-width="0.9" stroke-linejoin="round" fill="#2e2720">K6</text><text x="832" y="925" font-size="24" font-weight="bold" textLength="23" lengthAdjust="spacingAndGlyphs" text-anchor="start" stroke="#2e2720" stroke-width="0.9" stroke-linejoin="round" fill="#2e2720">K8</text><rect x="838" y="934" width="103" height="65" stroke-width="3.5" fill="none"/><text x="958" y="983" font-size="24.5" font-weight="bold" textLength="155" lengthAdjust="spacingAndGlyphs" text-anchor="start" stroke="#2e2720" stroke-width="0.9" stroke-linejoin="round" fill="#2e2720">USB power only</text><text x="275" y="933.5" font-size="34" font-weight="normal" textLength="86" lengthAdjust="spacingAndGlyphs" stroke="#2e2720" stroke-width="1.1" fill="#2e2720">Isaac</text><text x="387" y="933.5" font-size="34" font-weight="normal" textLength="13.5" lengthAdjust="spacingAndGlyphs" stroke="#2e2720" stroke-width="1.1" fill="#2e2720">-</text><text x="423" y="933.5" font-size="34" font-weight="normal" textLength="121" lengthAdjust="spacingAndGlyphs" stroke="#2e2720" stroke-width="1.1" fill="#2e2720">Isolated</text><text x="559" y="933.5" font-size="34" font-weight="normal" textLength="75.5" lengthAdjust="spacingAndGlyphs" stroke="#2e2720" stroke-width="1.1" fill="#2e2720">Audio</text><text x="648" y="933.5" font-size="34" font-weight="normal" textLength="51.5" lengthAdjust="spacingAndGlyphs" stroke="#2e2720" stroke-width="1.1" fill="#2e2720">and</text><text x="712.5" y="933.5" font-size="34" font-weight="normal" textLength="105" lengthAdjust="spacingAndGlyphs" stroke="#2e2720" stroke-width="1.1" fill="#2e2720">Control</text><text x="275" y="968" font-size="25" font-weight="bold" textLength="75.5" lengthAdjust="spacingAndGlyphs" stroke="#2e2720" stroke-width="0.8" fill="#2e2720">SA0BXI,</text><text x="364" y="968" font-size="25" font-weight="bold" textLength="88" lengthAdjust="spacingAndGlyphs" stroke="#2e2720" stroke-width="0.8" fill="#2e2720">SM0EPX,</text><text x="461" y="968" font-size="25" font-weight="bold" textLength="78.5" lengthAdjust="spacingAndGlyphs" stroke="#2e2720" stroke-width="0.8" fill="#2e2720">Revision</text><text x="547" y="968" font-size="25" font-weight="bold" textLength="38" lengthAdjust="spacingAndGlyphs" stroke="#2e2720" stroke-width="0.8" fill="#2e2720">0.9,</text><text x="592" y="968" font-size="25" font-weight="bold" textLength="115" lengthAdjust="spacingAndGlyphs" stroke="#2e2720" stroke-width="0.8" fill="#2e2720">2019-09-01</text><text x="278.5" y="988.5" font-size="17" font-weight="bold" textLength="177.5" lengthAdjust="spacingAndGlyphs" stroke="#2e2720" stroke-width="0.6" fill="#2e2720">&lt;support@sa0bxi.se&gt;</text></g>
<g fill="none" stroke="#1a1a1a" stroke-width="1"><circle cx="247" cy="188" r="3.2" fill="#fff"/><circle cx="1695" cy="188" r="3.2" fill="#fff"/><circle cx="247" cy="913" r="3.2" fill="#fff"/><circle cx="1695" cy="913" r="3.2" fill="#fff"/><path d="M416.5 118L420 114.5L423.5 118L420 121.5Z"/><path d="M335.5 317L339 313.5L342.5 317L339 320.5Z"/><path d="M545.5 133L549 129.5L552.5 133L549 136.5Z"/><path d="M613 239.3L616.5 235.8L620 239.3L616.5 242.8Z"/><path d="M785 104.5L788.5 101L792 104.5L788.5 108Z"/><path d="M961.5 104.5L965 101L968.5 104.5L965 108Z"/><path d="M1267 104.5L1270.5 101L1274 104.5L1270.5 108Z"/><path d="M1439.5 104.5L1443 101L1446.5 104.5L1443 108Z"/><path d="M289.5 567L293 563.5L296.5 567L293 570.5Z"/><path d="M293.5 677L297 673.5L300.5 677L297 680.5Z"/><path d="M563.5 578L567 574.5L570.5 578L567 581.5Z"/><path d="M563.5 617L567 613.5L570.5 617L567 620.5Z"/><path d="M562 674L565.5 670.5L569 674L565.5 677.5Z"/><path d="M526 795L529.5 791.5L533 795L529.5 798.5Z"/><path d="M1026.45 845.5L1029.95 842L1033.45 845.5L1029.95 849Z"/><path d="M804.5 786L808 782.5L811.5 786L808 789.5Z"/><path d="M963.5 786L967 782.5L970.5 786L967 789.5Z"/><path d="M1040.5 935L1044 931.5L1047.5 935L1044 938.5Z"/><path d="M1031 733L1034.5 729.5L1038 733L1034.5 736.5Z"/><path d="M1231.5 771L1235 767.5L1238.5 771L1235 774.5Z"/><path d="M1231.5 808.5L1235 805L1238.5 808.5L1235 812Z"/><path d="M1047.5 811L1051 807.5L1054.5 811L1051 814.5Z"/><path d="M1157.5 936L1161 932.5L1164.5 936L1161 939.5Z"/><path d="M1332.5 951L1336 947.5L1339.5 951L1336 954.5Z"/><path d="M1362.5 853L1366 849.5L1369.5 853L1366 856.5Z"/><path d="M1427.5 943L1431 939.5L1434.5 943L1431 946.5Z"/><path d="M1510.5 933L1514 929.5L1517.5 933L1514 936.5Z"/><path d="M1670.5 853L1674 849.5L1677.5 853L1674 856.5Z"/><circle cx="1574" cy="376" r="24" fill="#eeeeee" stroke="#222" stroke-width="1"/><circle cx="1574" cy="744" r="24" fill="#eeeeee" stroke="#222" stroke-width="1"/><path d="M886.5 977L889 974.5L891.5 977L889 979.5Z"/></g>
<rect x="211.5" y="99.8" width="1521" height="1.2" fill="#40c8c8"/><rect x="211.5" y="100.9" width="1521" height="1.3" fill="#e020c8"/><rect x="316" y="100.6" width="208" height="1.4" fill="#a8c030"/>
<rect x="211" y="999.3" width="1523" height="1.5" fill="#4cc4c4"/><rect x="1732" y="101" width="2" height="900" fill="#3fc0c0"/><rect x="211" y="101" width="1.5" height="899" fill="#8fbc8f"/>
<rect x="924" y="101" width="1.3" height="899" fill="#3060c0"/>
<path d="M212 806l4 5-4 5" fill="none" stroke="#222" stroke-width="1"/><path d="M212 96l4 5-4 5" fill="none" stroke="#222" stroke-width="1"/>
<rect x="1916.5" y="419" width="3.5" height="315" fill="#f07746"/><rect x="825" y="1052.5" width="547" height="3.5" fill="#f07746"/>
</svg>
<div id="panel" class="abs"><div class="t abs">PCB Designer</div>
<svg class="abs" style="left:1455px;top:0" width="465" height="24" viewBox="1455 0 465 24" font-family="'Liberation Sans',sans-serif">
<circle cx="1471" cy="12" r="11" fill="#1a6fc0"/><text x="1471" y="17" font-size="13" font-style="italic" font-weight="bold" fill="#fff" text-anchor="middle">hp</text>
<path d="M1497 8l6-4 6 4-6 4zM1497 14l6-4 6 4-6 4zM1500 18l3 2 3-2" fill="#e4e0d7"/>
<rect x="1525" y="1" width="22" height="22" fill="#1a7be0"/><circle cx="1536" cy="12" r="9" fill="#fff"/><path d="M1528 12l4-3v2h8v-2l4 3-4 3v-2h-8v2z" fill="#1a7be0"/>
<path d="M1558 10a14 14 0 0 1 20 0M1561 13.500a10 10 0 0 1 14 0M1564.500 17a5 5 0 0 1 7 0" fill="none" stroke="#8d8a82" stroke-width="2"/><circle cx="1568" cy="19" r="1.500" fill="#8d8a82"/>
<rect x="1590" y="2" width="20" height="20" rx="2" fill="#dcd8cf"/><text x="1600" y="17" font-size="12" fill="#3c3b37" text-anchor="middle">Sv</text>
<rect x="1623" y="6" width="18" height="12" fill="#25a8e0"/><path d="M1623 6l9 7 9-7M1623 18l6-6M1641 18l-6-6" fill="none" stroke="#fff" stroke-width="1.300"/>
<rect x="1655.500" y="6.500" width="21" height="11" rx="2" fill="none" stroke="#b9b5ac" stroke-width="1.500"/><rect x="1677" y="10" width="2" height="4" fill="#b9b5ac"/><rect x="1658" y="9" width="16" height="6" fill="#8d8a82"/><path d="M1668 8l-5 5h3l-2 4 5-5h-3z" fill="#e4e0d7"/>
<path d="M1691 9h3l5-4v14l-5-4h-3z" fill="#e4e0d7"/><path d="M1702 8a6 6 0 0 1 0 8M1705 5.500a9.500 9.500 0 0 1 0 13M1708 3.500a12 12 0 0 1 0 17" fill="none" stroke="#e4e0d7" stroke-width="1.400"/>
<text x="1723" y="17" font-size="14.5" fill="#e4e0d7" textLength="160" lengthAdjust="spacingAndGlyphs" xml:space="preserve">sön sep  1 2019 11:46:08</text>
<circle cx="1904" cy="12.500" r="5.500" fill="none" stroke="#e4e0d7" stroke-width="2.200" stroke-dasharray="2.400 1.920"/><circle cx="1904" cy="12.500" r="4" fill="none" stroke="#e4e0d7" stroke-width="1.600"/><rect x="1902.600" y="4" width="2.800" height="8" fill="#e4e0d7" stroke="#4a4842" stroke-width="1"/>
</svg></div>
<div id="launcher" class="abs">
<div style="position:absolute;left:0;top:300px;width:14px;height:560px;background:linear-gradient(rgba(150,150,156,0),rgba(150,150,156,.55) 20%,rgba(140,138,140,.6) 80%,rgba(140,138,140,0))"></div>
<div class="li" style="top:6px;height:52px;background:linear-gradient(#8d90a3,#8d90a3)"><svg width="52" height="52" viewBox="0 0 52 52"><circle cx="26" cy="26" r="15" fill="#fff"/><circle cx="26" cy="26" r="7.5" fill="none" stroke="#3c3b45" stroke-width="3.6"/><circle cx="16.500" cy="26" r="2.600" fill="#3c3b45"/><circle cx="30.800" cy="17.800" r="2.600" fill="#3c3b45"/><circle cx="30.800" cy="34.200" r="2.600" fill="#3c3b45"/></svg></div>
<div class="li" style="top:65px;height:52px;background:linear-gradient(#a8434f,#a8434f)"><svg width="52" height="52" viewBox="0 0 52 52"><path d="M8 8h36l2 6H6z" fill="#d8d8d8"/><rect x="9" y="11" width="34" height="8" fill="#f08a2a"/><rect x="9" y="14" width="34" height="2" fill="#f7c88a"/><rect x="6" y="19" width="40" height="26" rx="2" fill="#c9c9c9"/><rect x="6" y="19" width="40" height="3" fill="#e8e8e8"/><rect x="20" y="28" width="12" height="7" rx="1.500" fill="#f2f2f2" stroke="#777" stroke-width="1.500"/></svg></div>
<div class="li" style="top:124px;height:52px;background:linear-gradient(#8e8e90,#8e8e90)"><svg width="52" height="52" viewBox="0 0 52 52"><rect x="4" y="8" width="44" height="36" rx="2" fill="#cfcfcf"/><rect x="7" y="11" width="38" height="30" fill="#1d1d1d"/><path d="M12 17l7 4-7 4" fill="none" stroke="#fff" stroke-width="2.200"/><rect x="20" y="27" width="8" height="2.200" fill="#fff"/></svg></div>
<div class="li" style="top:183px;height:52px;background:linear-gradient(#b59b45,#b59b45)"><svg width="52" height="52" viewBox="0 0 52 52"><circle cx="26" cy="26" r="22" fill="#db4437"/><path d="M26 26L6.900 15A22 22 0 0 0 18 46.500z" fill="#0f9d58"/><path d="M26 26L18 46.500A22 22 0 0 0 47.700 22H26z" fill="#ffcd40"/><path d="M26 26L6.900 15A22 22 0 0 0 15 45.050L26 26z" fill="#0f9d58"/><circle cx="26" cy="26" r="10.500" fill="#f1f1f1"/><circle cx="26" cy="26" r="8.300" fill="#4285f4"/></svg></div>
<div class="li" style="top:242px;height:52px;background:linear-gradient(#b23c40,#b23c40)"><svg width="52" height="52" viewBox="0 0 52 52"><rect x="8" y="5" width="36" height="42" rx="3" fill="#f7f7f7"/><path d="M12 30c10-2 22-8 22-16 0-5-6-5-7 0-1 6 3 16 12 18M12 30c8 1 20 0 27-3" fill="none" stroke="#c8242b" stroke-width="2.200"/><rect x="13" y="38" width="26" height="1.200" fill="#bbb"/><rect x="13" y="41" width="26" height="1.200" fill="#bbb"/></svg></div>
<div class="li" style="top:301px;height:52px;background:linear-gradient(#3f6fb6,#3f6fb6)"><svg width="52" height="52" viewBox="0 0 52 52"><circle cx="26" cy="27" r="20" fill="#2a63b8"/><path d="M8 20c6-12 26-14 36-2-6-2-10 0-12 4z" fill="#5aa0e8"/><path d="M9 24l22-8 12 16-22 10z" fill="#f4f4f4"/><path d="M9 24l16 8 6-16" fill="none" stroke="#bbb" stroke-width="1.200"/><circle cx="42" cy="10" r="7.500" fill="#3a3a3a" stroke="#e8e8e8" stroke-width="1.500"/><text x="42" y="14" font-size="11" font-weight="bold" fill="#fff" text-anchor="middle" font-family="'Liberation Sans',sans-serif">5</text></svg></div>
<div class="li" style="top:360px;height:52px;background:linear-gradient(#a86a45,#a86a45)"><svg width="52" height="52" viewBox="0 0 52 52"><circle cx="26" cy="27" r="20" fill="#ff9a1f"/><path d="M26 7a20 20 0 0 1 18 28c-2-10-8-14-12-24 2 6 0 8-2 9-3-3-6-5-4-13z" fill="#ffd030"/><path d="M8 22a20 20 0 0 0 30 21c-8 2-16-1-18-8 4 3 9 2 10-2-6 0-8-6-14-5-3 0-6 2-8-6z" fill="#e8352a"/><circle cx="27" cy="29" r="8" fill="#5b3fc4"/><path d="M19 29c3 2 8 2 10-2 3 4-2 10-8 8z" fill="#ff7a1f"/></svg></div>
<div class="li" style="top:419px;height:52px;background:linear-gradient(#2d6da3,#2d6da3)"><svg width="52" height="52" viewBox="0 0 52 52"><path d="M9 4h24l10 10v34H9z" fill="#f4f4f4" stroke="#1c4f82" stroke-width="2.500"/><path d="M33 4v10h10z" fill="#6aa0d8"/><g fill="#1f5c99"><rect x="14" y="18" width="9" height="2.200"/><rect x="14" y="23" width="9" height="2.200"/><rect x="14" y="28" width="24" height="2.200"/><rect x="14" y="33" width="24" height="2.200"/><rect x="14" y="38" width="17" height="2.200"/></g><rect x="25" y="16" width="13" height="9" fill="#6aa0d8"/><path d="M26 24l4-5 3 3 2-2 3 4z" fill="#333"/></svg></div>
<div class="li" style="top:478px;height:52px;background:linear-gradient(#8f8f91,#8f8f91)"><svg width="52" height="52" viewBox="0 0 52 52"><rect x="9" y="5" width="30" height="42" fill="#f3f3f3" stroke="#bbb" stroke-width="1"/><g stroke="#c8c8d8" stroke-width="1"><path d="M12 12h24M12 16h24M12 20h24M12 24h24M12 28h24M12 32h24M12 36h24M12 40h24"/></g><path d="M44 14l4 4-16 22-6 3 2-7z" fill="#3a3a3a"/><path d="M44 14l4 4-2.500 3-4-4z" fill="#e79ac0"/><path d="M28 36l-2 7 6-3z" fill="#f0d060"/></svg></div>
<div class="li" style="top:537px;height:52px;background:linear-gradient(rgba(255,255,255,.14),rgba(255,255,255,.14))"><svg width="52" height="52" viewBox="0 0 52 52"><path d="M8 8h36l2 8H6z" fill="#555"/><rect x="6" y="12" width="40" height="34" rx="2" fill="#1c1c1c"/><rect x="12" y="18" width="28" height="24" rx="2" fill="#2b2b2b"/><circle cx="26" cy="24" r="3.500" fill="#e8e8e8"/><circle cx="26" cy="24" r="1.500" fill="#222"/><path d="M26 38v-7l4-4M26 33l-4-1" stroke="#e8e8e8" stroke-width="1.500" fill="none"/></svg></div>
<div class="li" style="top:596px;height:52px;background:linear-gradient(rgba(255,255,255,.14),rgba(255,255,255,.14))"><svg width="52" height="52" viewBox="0 0 52 52"><circle cx="26" cy="26" r="21" fill="#e8eef8"/><path d="M6 22c10-10 26-10 38-4l2 6c-12-6-28-5-40 4z" fill="#3c86e0"/><path d="M5.500 31c10-8 26-6 40 2l-1.500 5c-12-7-26-8-37-1z" fill="#3c86e0"/><path d="M11 41c8-4 18-3 27 2l-5 3c-6-3-12-4-18-2z" fill="#3c86e0"/><path d="M14 9c8-3 16-3 24 1l3 3c-10-4-20-4-30 0z" fill="#3c86e0"/></svg></div>
<div class="li" style="top:655px;height:52px;background:linear-gradient(rgba(255,255,255,.14),rgba(255,255,255,.14))"><svg width="52" height="52" viewBox="0 0 52 52"><circle cx="30" cy="28" r="15" fill="none" stroke="#d9d9d9" stroke-width="9" stroke-dasharray="7.850 3.930"/><circle cx="30" cy="28" r="12" fill="none" stroke="#d9d9d9" stroke-width="7"/><path d="M8 44L38 14" stroke="#d42a1c" stroke-width="6.500" stroke-linecap="round"/><path d="M36 16l6-9 5 2-4 4 3 3 4-4 2 5-9 6z" fill="#ececec"/><circle cx="9" cy="43" r="1.800" fill="#fff"/></svg></div>
<div class="li" style="top:714px;height:52px;background:linear-gradient(rgba(255,255,255,.14),rgba(255,255,255,.14))"><svg width="52" height="52" viewBox="0 0 52 52"><path d="M9 4h24l10 10v34H9z" fill="#f4f4f4" stroke="#8a3a1a" stroke-width="2.500"/><path d="M33 4v10h10z" fill="#d8703a"/><rect x="14" y="20" width="24" height="16" fill="#fff" stroke="#c8501e" stroke-width="1.500"/><rect x="16" y="23" width="9" height="2" fill="#c8501e"/><rect x="16" y="27" width="9" height="2" fill="#c8501e"/><rect x="16" y="31" width="9" height="2" fill="#c8501e"/><rect x="27" y="23" width="9" height="10" fill="#3a8a3a"/><path d="M20 42l6-5 6 5" fill="none" stroke="#8a3a1a" stroke-width="1.500"/></svg></div>
<div class="li" style="top:773px;height:52px;background:linear-gradient(#3fa03f,#3fa03f)"><svg width="52" height="52" viewBox="0 0 52 52"><path d="M9 2h24l10 10v36H9z" fill="#f4f4f4" stroke="#1f7a1f" stroke-width="2.500"/><path d="M33 2v10h10z" fill="#7ad07a"/><g fill="#2f9a2f"><rect x="13" y="16" width="7" height="4"/><rect x="22" y="16" width="7" height="4"/><rect x="31" y="16" width="7" height="4"/><rect x="13" y="22" width="7" height="4"/><rect x="22" y="22" width="7" height="4"/><rect x="31" y="22" width="7" height="4"/><rect x="13" y="28" width="7" height="4"/><rect x="22" y="28" width="7" height="4"/><rect x="13" y="34" width="7" height="4"/><rect x="22" y="34" width="7" height="4"/></g><rect x="30" y="28" width="11" height="12" fill="#fff" stroke="#999" stroke-width=".800"/><rect x="32" y="33" width="2.500" height="6" fill="#e8702a"/><rect x="35.500" y="30" width="2.500" height="9" fill="#2a70c8"/></svg></div>
<div class="li" style="top:832px;height:52px;background:linear-gradient(rgba(255,255,255,.14),rgba(255,255,255,.14))"><svg width="52" height="52" viewBox="0 0 52 52"><path d="M5 16h42l-2 30H7z" fill="#e85a1c"/><path d="M5 16h42l-.700 8H5.700z" fill="#f07a3a"/><path d="M18 18c0-10 16-10 16 0" fill="none" stroke="#d88a6a" stroke-width="2.500"/><path d="M18 40l8-18 8 18M21 34h10" fill="none" stroke="#fff" stroke-width="3.600"/><rect x="16" y="34" width="20" height="3.500" rx="1.700" fill="#fff"/></svg></div>
<div class="li" style="top:891px;height:52px;background:linear-gradient(#a07f45,#a07f45)"><svg width="52" height="52" viewBox="0 0 52 52"><path d="M8 6h34l4 36H6z" fill="#f0f0ee"/><path d="M6 42h40v3H6z" fill="#cfcfcf"/><path d="M20 12v26M20 20l9-5M20 30l9 5" stroke="#2a9a4a" stroke-width="2.200" fill="none"/><circle cx="20" cy="12" r="2" fill="#d82a2a"/><circle cx="29" cy="36" r="2" fill="#d82a2a"/><path d="M12 22h8" stroke="#2a4ac8" stroke-width="2"/><path d="M46 12l4 4-18 20-6 2 2-6z" fill="#f0902a"/><path d="M28 32l-2 6 6-2z" fill="#f0d890"/></svg></div>
<div class="li" style="top:950px;height:52px;background:linear-gradient(#6ea03c,#6ea03c)"><svg width="52" height="52" viewBox="0 0 52 52"><path d="M10 8h32l4 34H6z" fill="#2f9a3a"/><path d="M6 42h40v3H6z" fill="#cfd8cf"/><path d="M14 12v10M18 12v14M22 12v10M12 30h10v8H12z" stroke="#9ad89a" stroke-width="1.400" fill="none"/><rect x="20" y="24" width="14" height="12" rx="1.500" fill="#d8e8d0" opacity=".85"/><path d="M46 12l4 4-18 20-6 2 2-6z" fill="#f0902a"/><path d="M28 32l-2 6 6-2z" fill="#f0d890"/></svg></div>
<div style="position:absolute;left:4px;top:1008px;width:56px;height:48px"><svg width="56" height="48" viewBox="0 0 56 48"><path d="M6 0h44l5 26H1z" fill="#8a8c98" stroke="#b0b2bc" stroke-width="1"/><path d="M12 3l28-2 6 18-30 5z" fill="#e8e8e8" stroke="#666" stroke-width=".8"/><path d="M14 5l20-1 4 13-21 3z" fill="#1c1c1c"/><circle cx="27" cy="14" r="7.5" fill="#9ab8e0" stroke="#1a1a1a" stroke-width="2.2"/><path d="M33 18l13 6" stroke="#1a1a1a" stroke-width="3.5" stroke-linecap="round"/><path d="M5 30h46l3 16H2z" fill="#70727e" stroke="#9a9ca6" stroke-width="1"/><path d="M18 33h20l3 11H15z" fill="#d8d8d8" opacity=".8"/></svg></div>
<div style="position:absolute;left:0;top:92px;width:3px;height:2px;background:#d8d8d8;box-shadow:0 3px 0 #d8d8d8,0 -3px 0 #d8d8d8"></div>
<div style="position:absolute;left:0;top:151px;width:3px;height:2px;background:#d8d8d8;box-shadow:0 3px 0 #d8d8d8,0 -3px 0 #d8d8d8"></div>
<div style="position:absolute;left:0;top:269px;width:3px;height:2px;background:#d8d8d8;box-shadow:0 3px 0 #d8d8d8,0 -3px 0 #d8d8d8"></div>
<div style="position:absolute;left:0;top:328px;width:3px;height:2px;background:#d8d8d8;box-shadow:0 3px 0 #d8d8d8,0 -3px 0 #d8d8d8"></div>
<div style="position:absolute;left:0;top:446px;width:3px;height:2px;background:#d8d8d8;box-shadow:0 3px 0 #d8d8d8,0 -3px 0 #d8d8d8"></div>
<div style="position:absolute;left:0;top:505px;width:3px;height:2px;background:#d8d8d8;box-shadow:0 3px 0 #d8d8d8,0 -3px 0 #d8d8d8"></div>
<div style="position:absolute;left:0;top:918px;width:3px;height:2px;background:#d8d8d8;box-shadow:0 3px 0 #d8d8d8,0 -3px 0 #d8d8d8"></div>
<div style="position:absolute;left:0;top:205px;width:0;height:0;border-left:4px solid #e0e0e0;border-top:4px solid transparent;border-bottom:4px solid transparent"></div>
<div style="position:absolute;left:0;top:382px;width:0;height:0;border-left:4px solid #e0e0e0;border-top:4px solid transparent;border-bottom:4px solid transparent"></div>
<div style="position:absolute;left:0;top:560px;width:0;height:0;border-left:4px solid #e0e0e0;border-top:4px solid transparent;border-bottom:4px solid transparent"></div>
<div style="position:absolute;left:0;top:796px;width:0;height:0;border-left:4px solid #e0e0e0;border-top:4px solid transparent;border-bottom:4px solid transparent"></div>
<div style="position:absolute;left:0;top:972px;width:0;height:0;border-left:4px solid #e0e0e0;border-top:4px solid transparent;border-bottom:4px solid transparent"></div>
<div style="position:absolute;left:59px;top:972px;width:0;height:0;border-right:5px solid #e8e8e8;border-top:5px solid transparent;border-bottom:5px solid transparent"></div>
<div style="position:absolute;left:64px;top:0;width:1px;height:1056px;background:#3a3a40"></div>
</div>
<div id="title" class="abs">
<div class="wb" style="left:7px;background:radial-gradient(circle at 50% 35%,#f58a62,#df4f20);box-shadow:0 0 0 1px #5a2a18"></div><div class="wb" style="left:26px"></div><div class="wb" style="left:45px"></div>
<svg class="abs" style="left:7px;top:7px" width="56" height="16"><path d="M5 5l6 6M11 5l-6 6" stroke="#5a1d08" stroke-width="1.500"/><path d="M23.500 8.500h7" stroke="#3a3935" stroke-width="1.500"/><rect x="42.500" y="5.500" width="7" height="6" fill="none" stroke="#3a3935" stroke-width="1.200"/></svg>
<div class="abs" style="left:73px;top:6.5px;color:#e4e0d7;font-weight:bold;font-size:14.5px;letter-spacing:.15px;white-space:nowrap">isaac (isaac/isaac-0.9.pcb) - PCB</div>
<div class="cb" style="left:1457px;width:232px"><span style="margin-left:1px;letter-spacing:-.8px">r __.__; phi __._; __.__ __.__</span></div>
<div class="cb" style="left:1695px;width:115px"><span style="margin-left:0px;letter-spacing:-.4px">49.2500 0.0000</span></div>
<div class="abs" style="left:1814px;top:29px;width:35px;height:26px;border-radius:4px;background:linear-gradient(#fbfbfa,#eceae7);color:#3c3c3c;font-weight:bold;font-size:15px;line-height:27px;text-align:center">mm</div>
</div>
<div id="layers" class="abs">
<div class="lr" style="top:0;background:linear-gradient(#e9e8e6,#dddbd8)"><i style="background:linear-gradient(135deg,#a03235,#8b2326)"></i><span>top</span></div>
<div class="lr" style="top:23px"><i style="background:linear-gradient(135deg,#4f71dc,#3a5fcd)"></i><span>ground</span></div>
<div class="lr" style="top:46px"><i style="background:linear-gradient(135deg,#2b65a8,#104e8b)"></i><span>signal2</span></div>
<div class="lr" style="top:69px"><i style="background:linear-gradient(135deg,#dc4a17,#cd3700)"></i><span>signal3</span></div>
<div class="lr" style="top:92px"><i style="background:linear-gradient(135deg,#6aa26c,#548b54)"></i><span>power</span></div>
<div class="lr" style="top:115px"><i style="background:linear-gradient(135deg,#a08a70,#8b7355)"></i><span>bottom</span></div>
<div class="lr" style="top:138px"><i style="background:linear-gradient(135deg,#1e989c,#00868b)"></i><span>outline</span></div>
<div class="lr" style="top:161px"><i style="background:linear-gradient(135deg,#3ba03b,#228b22)"></i><span>spare</span></div>
<div class="lr" style="top:184px"><i style="background:linear-gradient(135deg,#222,#000)"></i><span>silk</span></div>
<div class="lr" style="top:207px;height:26px"><i style="background:linear-gradient(135deg,#c69a2a,#b8860b)"></i><span>rat lines</span></div>
<div class="abs" style="left:0;top:232px;width:138px;height:1px;background:#dedcd8"></div>
<div class="lr" style="top:233px;height:24px;font-style:italic"><i style="top:3px;background:linear-gradient(135deg,#666,#4d4d4d)"></i><span style="top:1px">pins/pads</span></div>
<div class="lr" style="top:257px;font-style:italic"><i style="top:2px;background:linear-gradient(135deg,#939393,#7f7f7f)"></i><span>vias</span></div>
<div class="lr" style="top:280px;font-style:italic"><i style="top:2px;background:#cfcfcf"></i><span>far side</span></div>
<div class="lr" style="top:303px;font-style:italic"><i style="top:2px;background:linear-gradient(135deg,#f01818 0,#f01818 27%,#fff 28%);border-color:#111"></i><span>solder mask</span></div>
<div class="abs" style="left:23px;top:0;width:1px;height:326px;background:#e4e2df"></div>
</div>
<div class="btn" style="left:70px;top:639px;width:137px;height:26px;font-size:15px;line-height:25px;text-align:center">2D View</div>
<div class="abs" style="left:85px;top:669px;width:106px;height:106px;border-radius:50%;background:radial-gradient(circle at 60% 38%,#f3f2f1 0,#e2e0de 30%,#cfcdca 60%,#b9b6b2 85%,#a9a6a2 100%)"></div>
<div class="abs" style="left:69px;top:777px;width:138px;height:167px;box-shadow:0 0 0 1px #dcdad6"></div>
<div class="abs" style="left:69px;top:947px;width:138px;height:128px;box-shadow:0 0 0 1px #dcdad6"></div>
<div class="tb" style="left:71.5px;top:780px"><svg width="30" height="30" viewBox="0 0 30 30" style="position:absolute;left:-1px;top:-1px"><path d="M15 4.500l4 4-4 4-4-4z" fill="none" stroke="#666" stroke-width="1.200"/><text x="15" y="27" font-size="12" font-family="'Liberation Mono',monospace" text-anchor="middle" textLength="15" lengthAdjust="spacingAndGlyphs" fill="#111">VIA</text></svg></div>
<div class="tb" style="left:104.5px;top:780px"><svg width="30" height="30" viewBox="0 0 30 30" style="position:absolute;left:-1px;top:-1px"><circle cx="7.500" cy="6.500" r="1.800" fill="none" stroke="#5b9bd5"/><circle cx="22" cy="10.500" r="1.800" fill="none" stroke="#5b9bd5"/><path d="M9 7l11.500 3" stroke="#5b9bd5" stroke-width="1"/><text x="15" y="27" font-size="12" font-family="'Liberation Mono',monospace" text-anchor="middle" textLength="20" lengthAdjust="spacingAndGlyphs" fill="#111">LINE</text></svg></div>
<div class="tb" style="left:137.5px;top:780px"><svg width="30" height="30" viewBox="0 0 30 30" style="position:absolute;left:-1px;top:-1px"><path d="M10 3c1 6 5 10 11 11" fill="none" stroke="#5b9bd5" stroke-width="1.200"/><text x="15" y="27" font-size="12" font-family="'Liberation Mono',monospace" text-anchor="middle" textLength="19" lengthAdjust="spacingAndGlyphs" fill="#111">ARC</text></svg></div>
<div class="tb" style="left:71.5px;top:813px"><svg width="30" height="30" viewBox="0 0 30 30" style="position:absolute;left:-1px;top:-1px"><path d="M6 8.500h18" stroke="#5b9bd5" stroke-width="2" stroke-dasharray="2 1.700"/><text x="15" y="27" font-size="12" font-family="'Liberation Mono',monospace" text-anchor="middle" textLength="20" lengthAdjust="spacingAndGlyphs" fill="#111">TEXT</text></svg></div>
<div class="tb" style="left:104.5px;top:813px"><svg width="30" height="30" viewBox="0 0 30 30" style="position:absolute;left:-1px;top:-1px"><rect x="6" y="5" width="18" height="9" fill="#5b9bd5"/><text x="15" y="27" font-size="12" font-family="'Liberation Mono',monospace" text-anchor="middle" textLength="20" lengthAdjust="spacingAndGlyphs" fill="#111">RECT</text></svg></div>
<div class="tb" style="left:137.5px;top:813px"><svg width="30" height="30" viewBox="0 0 30 30" style="position:absolute;left:-1px;top:-1px"><path d="M8 15l8-10h1.500v4l6.500 6z" fill="#5b9bd5"/><text x="15" y="27" font-size="12" font-family="'Liberation Mono',monospace" text-anchor="middle" textLength="20" lengthAdjust="spacingAndGlyphs" fill="#111">POLY</text></svg></div>
<div class="tb" style="left:71.5px;top:846.5px"><svg width="30" height="30" viewBox="0 0 30 30" style="position:absolute;left:-1px;top:-1px"><path d="M6 15l8-10h1l8.500 10z" fill="#5b9bd5"/><rect x="9.500" y="10" width="4.500" height="3" fill="#fff" stroke="#111" stroke-width="1"/><text x="15" y="27" font-size="12" font-family="'Liberation Mono',monospace" text-anchor="middle" textLength="18" lengthAdjust="spacingAndGlyphs" fill="#111">HOLE</text></svg></div>
<div class="tb" style="left:104.5px;top:846.5px"><svg width="30" height="30" viewBox="0 0 30 30" style="position:absolute;left:-1px;top:-1px"><rect x="12.500" y="5" width="5" height="10" fill="#f4f4f4" stroke="#111" stroke-width="1"/><path d="M11 6v9M19 6v9" stroke="#c8b070" stroke-width="1" stroke-dasharray="1 1"/><text x="15" y="27" font-size="12" font-family="'Liberation Mono',monospace" text-anchor="middle" textLength="17" lengthAdjust="spacingAndGlyphs" fill="#111">BUF</text></svg></div>
<div class="tb" style="left:137.5px;top:846.5px"><svg width="30" height="30" viewBox="0 0 30 30" style="position:absolute;left:-1px;top:-1px"><path d="M8 5l14 10M22 5l-14 10" stroke="#111" stroke-width="1"/><ellipse cx="15" cy="9" rx="4" ry="3.500" fill="#111"/><rect x="13.500" y="11" width="3" height="4" fill="#111"/><circle cx="13.500" cy="8.500" r="1" fill="#fff"/><circle cx="16.500" cy="8.500" r="1" fill="#fff"/><text x="15" y="27" font-size="12" font-family="'Liberation Mono',monospace" text-anchor="middle" textLength="17" lengthAdjust="spacingAndGlyphs" fill="#111">DEL</text></svg></div>
<div class="tb" style="left:71.5px;top:879.5px"><svg width="30" height="30" viewBox="0 0 30 30" style="position:absolute;left:-1px;top:-1px"><path d="M14.500 16c4-1 5-6 1-10" fill="none" stroke="#5b9bd5" stroke-width="1.300"/><path d="M13 7l3-3.500 1 4z" fill="#5b9bd5"/><text x="15" y="27" font-size="12" font-family="'Liberation Mono',monospace" text-anchor="middle" textLength="17" lengthAdjust="spacingAndGlyphs" fill="#111">ROT</text></svg></div>
<div class="tb" style="left:104.5px;top:879.5px"><svg width="30" height="30" viewBox="0 0 30 30" style="position:absolute;left:-1px;top:-1px"><circle cx="7.500" cy="13" r="1.800" fill="none" stroke="#555"/><circle cx="22" cy="13" r="1.800" fill="none" stroke="#555"/><path d="M9.500 13h10.500" stroke="#5b9bd5"/><circle cx="12" cy="5.500" r="1.500" fill="none" stroke="#555" stroke-width=".800"/><path d="M9 9h3M15 9h3" stroke="#111" stroke-width="1"/><text x="15" y="27" font-size="12" font-family="'Liberation Mono',monospace" text-anchor="middle" textLength="16" lengthAdjust="spacingAndGlyphs" fill="#111">INS</text></svg></div>
<div class="tb" style="left:137.5px;top:879.5px"><svg width="30" height="30" viewBox="0 0 30 30" style="position:absolute;left:-1px;top:-1px"><path d="M9 5l12 10M21 5l-12 10" stroke="#111" stroke-width="1"/><rect x="12.500" y="7.500" width="5" height="5" rx="1" fill="#e8f8f0" stroke="#58d8a8" stroke-width="1"/><text x="15" y="27" font-size="12" font-family="'Liberation Mono',monospace" text-anchor="middle" textLength="21" lengthAdjust="spacingAndGlyphs" fill="#111">THRM</text></svg></div>
<div class="tb" style="left:71.5px;top:912.5px;background:linear-gradient(#dedcd8,#e6e4e1)"><svg width="30" height="30" viewBox="0 0 30 30" style="position:absolute;left:-1px;top:-1px"><path d="M8 4l9 3.500-3 1.500 5 5-2 2-5-5-1.500 3z" fill="#5b9bd5" stroke="#111" stroke-width=".800"/><text x="15" y="27" font-size="12" font-family="'Liberation Mono',monospace" text-anchor="middle" textLength="17" lengthAdjust="spacingAndGlyphs" fill="#111">SEL</text></svg></div>
<div class="tb" style="left:104.5px;top:912.5px"><svg width="30" height="30" viewBox="0 0 30 30" style="position:absolute;left:-1px;top:-1px"><path d="M12 10v-3a3 3 0 0 1 6 0v3" fill="none" stroke="#111" stroke-width="1.200"/><rect x="9.500" y="10" width="11" height="7.500" fill="#fff" stroke="#111" stroke-width="1"/><path d="M9.500 12.500h11M9.500 15h11" stroke="#111" stroke-width="1"/><text x="15" y="27" font-size="12" font-family="'Liberation Mono',monospace" text-anchor="middle" textLength="18" lengthAdjust="spacingAndGlyphs" fill="#111">LOCK</text></svg></div>
<div class="btn" style="left:75px;top:950px;width:94px;height:26px;font-size:15px;line-height:25px;text-align:center;background:linear-gradient(#fdfdfd,#f1f0ee)">Route Styles</div>
<div class="rd" style="top:982px;background:radial-gradient(circle,#3c2a22 0,#3c2a22 28%,#ee6a3a 34%,#e85a28 100%);border-color:#b24a22"></div><div class="rl" style="top:981px">Signal</div>
<div class="rd" style="top:1006px"></div><div class="rl" style="top:1005px">Power</div>
<div class="rd" style="top:1030px"></div><div class="rl" style="top:1029px">Fat</div>
<div class="rd" style="top:1054px"></div><div class="rl" style="top:1053px">Skinny</div>
<div id="status"><span style="position:absolute;left:211px;top:1059px;font-size:14.5px;white-space:nowrap"><b>view</b>=top</span><span style="position:absolute;left:282px;top:1059px;font-size:14.5px;white-space:nowrap"><b>grid</b>=0.0500 mm</span><span style="position:absolute;left:397px;top:1059px;font-size:14.5px;white-space:nowrap">45_/,R</span><span style="position:absolute;left:451px;top:1059px;font-size:14.5px;white-space:nowrap"><b>line</b>=0.2540</span><span style="position:absolute;left:536px;top:1059px;font-size:14.5px;white-space:nowrap"><b>via</b>=0.9144 (0.5080)</span><span style="position:absolute;left:671px;top:1059px;font-size:14.5px;white-space:nowrap"><b>clearance</b>=0.2540</span><span style="position:absolute;left:799px;top:1059px;font-size:14.5px;white-space:nowrap"><b>text</b>=100%</span><span style="position:absolute;left:881px;top:1059px;font-size:14.5px;white-space:nowrap"><b>buffer</b>=#1</span></div>
</body></html>
